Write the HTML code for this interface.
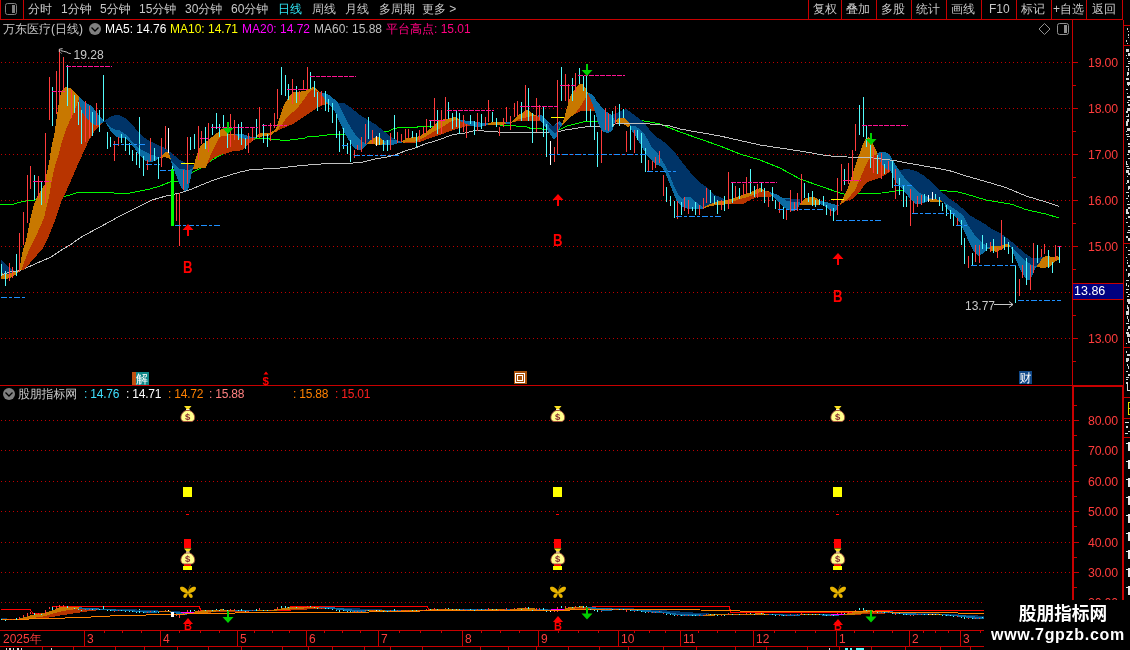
<!DOCTYPE html><html lang="zh-CN"><head><meta charset="utf-8"><title>万东医疗(日线)</title>
<style>
html,body{margin:0;padding:0;background:#000;}
body{width:1130px;height:650px;position:relative;overflow:hidden;font-family:"Liberation Sans","WenQuanYi Zen Hei","Noto Sans CJK SC",sans-serif;font-size:12px;color:#C8C8C8;}
.t{position:absolute;white-space:nowrap;line-height:14px;height:14px;will-change:transform;}
.tb{top:2px;}
.r2{top:22px;}
.ax{color:#FF3C3C;left:1087.5px;font-size:12.3px;letter-spacing:-0.2px}
.sh{top:387px;letter-spacing:-0.2px}
#wm{position:absolute;left:984px;top:600px;width:146px;height:50px;background:#000;}
#wm .a{will-change:transform;position:absolute;left:0;width:146px;text-align:center;color:#fff;font-weight:bold;white-space:nowrap;font-family:"Liberation Sans","Noto Sans CJK SC",sans-serif}
svg{position:absolute;left:0;top:0;will-change:transform;}
svg text{font-family:"Liberation Sans","WenQuanYi Zen Hei","Noto Sans CJK SC",sans-serif;}
</style></head><body>
<svg width="1130" height="650" viewBox="0 0 1130 650" shape-rendering="crispEdges">
<rect width="1130" height="650" fill="#000"/>
<line x1="1" x2="1072" y1="62.5" y2="62.5" stroke="#C00000" stroke-dasharray="1 3"/>
<line x1="1" x2="1072" y1="108.5" y2="108.5" stroke="#C00000" stroke-dasharray="1 3"/>
<line x1="1" x2="1072" y1="154.5" y2="154.5" stroke="#C00000" stroke-dasharray="1 3"/>
<line x1="1" x2="1072" y1="200.5" y2="200.5" stroke="#C00000" stroke-dasharray="1 3"/>
<line x1="1" x2="1072" y1="246.5" y2="246.5" stroke="#C00000" stroke-dasharray="1 3"/>
<line x1="1" x2="1072" y1="292.5" y2="292.5" stroke="#C00000" stroke-dasharray="1 3"/>
<line x1="1" x2="1072" y1="338.5" y2="338.5" stroke="#C00000" stroke-dasharray="1 3"/>
<line x1="1" x2="1072" y1="420.5" y2="420.5" stroke="#C00000" stroke-dasharray="1 3"/>
<line x1="1" x2="1072" y1="450.5" y2="450.5" stroke="#C00000" stroke-dasharray="1 3"/>
<line x1="1" x2="1072" y1="481.5" y2="481.5" stroke="#C00000" stroke-dasharray="1 3"/>
<line x1="1" x2="1072" y1="511.5" y2="511.5" stroke="#C00000" stroke-dasharray="1 3"/>
<line x1="1" x2="1072" y1="542.5" y2="542.5" stroke="#C00000" stroke-dasharray="1 3"/>
<line x1="1" x2="1072" y1="572.5" y2="572.5" stroke="#C00000" stroke-dasharray="1 3"/>
<line x1="1" x2="1072" y1="602.5" y2="602.5" stroke="#C00000" stroke-dasharray="1 3"/>
<polyline points="0,204.5 13,204.5 18,202.5 26,201 35,200 50,198 64,196.5 70,195 76,193 90,192.5 100,192 114,193 130,193 140,191 150,189 160,186 170,182 178,181.5 192,172.5 200,168.5 207,163.5 212,160 220,155.5 230,151 240,149 246,145.5 253,140 255,139 258,138.5 269,138.5 270,139.5 279,139.5 281,140.5 289,140.5 291,139.5 297,139.5 299,138.5 304,138.5 308,136.5 318,136.5 320,135.5 327,135 329,134 335,134.5 342,134.5 360,133 383,131.5 389,131 393,129 399,127.5 417,127.2 419,126.5 433,126.5 450,124.5 482,123.5 487,123.5 505,125.5 515,125.5 517,126.5 526,126.5 528,127.5 531,128.5 541,128.5 543,129.5 546,129.5 556,130 561,129 567,126 575,124 583,122 592,121.5 620,120 641,120.5 650,122 660,124 680,132 700,139 720,146 740,154 760,160 780,168 800,179 820,186 840,193 846,194.4 858,193.6 882,193 896,191 904,190.4 941,190.6 956,191.6 966,194 986,200 1012,204.4 1026,209.6 1046,214 1059,218" fill="none" stroke="#00F800" stroke-width="1"/>
<polyline points="1,275 10,272 18,271 24,269 35,264 51,257 60,251 70,245 77,240 83,236 100,227 120,216 140,206 152,200 166,196 180,193 191,189.5 200,185.5 210,181.5 220,178 230,175 240,172 254,169 263,169 280,168 300,165.6 326,163.6 335,163.5 351,163.2 363,162 375,159 387,157 395,155 405,151 415,148 425,144 435,141 440,139.5 450,135.5 459,133.5 465,133 473,131 476,130.5 483,130.5 485,131.5 497,131.5 499,132.5 555,132.5 565,130 575,128.5 585,127 595,126.5 612,126 615,124 625,123.5 645,123.5 655,124.5 668,125.5 680,129 720,136 760,145 800,151 826,155.5 836,156.5 847,157 870,157.5 886,159.5 894,160.5 910,163.5 930,167 949,170.5 966,176 986,181.6 1006,187.6 1026,196 1046,202 1059,206.4" fill="none" stroke="#C0C0C0" stroke-width="1"/>
<g id="ribbon">
<polygon points="1,260 5,264 10,268 15,271 18,272 18,271 15,272 6,274.5 1,273" fill="#003468"/>
<polygon points="1,273 6,274.5 15,272 18,270 19,271.5 15,275 10,278 5,279.5 1,279" fill="#C87800"/>
<polygon points="21.5,270 25,260 29,250 34,240 36,236 41,225 44,218 49.1,196 51,185 52.2,178.3 53.3,172.7 54.9,166 56.6,161 59,153 61,145 65,132 70,120 74,112 77,105 79,99 79,97 82,99.5 85,102 90,105 94,109 98,114 101,118 104,121 104,122 101,124 98,127 94,132 89,140 85,149 80,160 75,171 70,183 65,194 62,200 59,209 56,218 52,228 48,238 43,248 37,255 30,263 24,270" fill="#B83400"/>
<polygon points="19,271 21,260 23,250 26,241 28,230 30.5,218 33.7,205 37.6,195.5 38.9,194 42.7,187.7 45,183.8 46,177 47.2,171 48.3,166.6 49.4,161 51,150 53,140 54,136 57,116 59,102 61,93 64,88 65,87 68,87.6 71,88.5 76,94 79,97 79,99 77,105 74,112 70,120 65,132 61,145 59,153 56.6,161 54.9,166 53.3,172.7 52.2,178.3 51,185 49.1,196 44,218 41,225 36,236 34,240 29,250 25,260 21.5,270" fill="#C87800"/>
<polygon points="79,97 82,99.5 85,102 90,105 94,109 98,114 101,118 104,121 104,122 101,123.5 98,125 95,125.5 90,122 85,117 81,110 79,99" fill="#0C6CA4"/>
<polygon points="104,121 105,120.5 110,117 115,115 120,115.5 125,118 130,123 135,128 140,134 145,138 150,141.5 155,143.5 160,146 165,148 170,152 175,156 180,160 185,162.5 190,165 194,165.5 193,168 190,169.5 185,169.5 180,169 177,167 174,164 171,160 169,154 167,151.5 163,154 159,158 155,156 150,154 145,151.5 140,149 135,145 130,139 125,134 120,130.5 115,129.5 110,127 105,122 104,122" fill="#003468"/>
<polygon points="104,122 105,122 110,127 115,129.5 120,130.5 125,134 130,139 135,145 140,149 145,151.5 150,154 155,156 159,158 163,154 167,151.5 169,154 171,160 174,164 177,167 180,169 185,169.5 190,169.5 193,168 194,165.5 193,168.5 192,172 190,181 188,190 184,191 182,189 179,183 176,175 173,167 170,159 165,157 159,158.5 155,161 150,162 145,160.5 140,156 135,149 130,142 125,138 120,138 115,136 110,130 105,121.5 104,122.5" fill="#0C6CA4"/>
<polygon points="159,158 163,154 167,151.5 169,154 171,159.5 170,159 165,157 159,158.5" fill="#C87800"/>
<polygon points="206,167.5 208,161 212,152 216,144 219,138 222,136 226,136 230,135 235,134.5 238,133.5 243,134 248,136 254,137.5 257,136 257,137 254,139 250,143 246,146.5 243,150 240,150.5 232,151.5 226,153.5 220,155 212,159 207,164 206,167.5" fill="#B83400"/>
<polygon points="193,169 195,161 197,154 200,147 203,143.5 207,141 212,137 217,133 221,129 223,128.5 226,132 229,134 232,133.5 235,134.5 235,134.5 230,135 226,136 222,136 219,138 216,144 212,152 208,161 206,167.5 200,168 193,169.5" fill="#C87800"/>
<polygon points="235,134.5 238,133.5 243,134 248,136 254,137.5 257,136 257,137 254,138 250,138.5 245,139 240,138 236,135" fill="#0C6CA4"/>
<polygon points="275,132 279,128 283,123 287,117 293,112 299,106 305,98 310,91 313.5,89 319,92 321.5,94 325,100 328,104 329,105 328,103.5 323,105 317,108 311,112 305,116 299,120 293,124 287,126.5 281,129 275,132.5" fill="#B83400"/>
<polygon points="257,135 260,133 269,133 273,131 276,128 279,120 282,110 285,103 289,97 293,92.5 305,91 310,88.5 313.5,87 316,88.5 319,92 319,92 313.5,89 310,91 305,98 299,106 293,112 287,117 283,123 279,128 275,132 272,134.5 267,136 257,137" fill="#C87800"/>
<polygon points="338,102.5 345,103.5 350,107 355,111 360,115 365,118 370,121 375,124 380,128 385,132 390,136 395,139 399,141 402,142 402,142 395,140 390,139.5 384,141 385,144 382,144.5 375,144.5 368,144 366,143.5 363,142 359,138.5 355,134 351,128 347,121 343,113 338,102.5" fill="#003468"/>
<polygon points="319,92 323,93 329,95 334,99 338,102.5 343,113 347,121 351,128 355,134 359,138.5 363,142 366,143.5 368,144 375,144.5 382,144.5 385,144 384,141 390,139.5 395,140 402,142 402,142.5 395,144 391,145.5 385,144.5 382,144.5 375,144.5 368,144 367,144 363,149 358,150 354,148 350,142 345,134 340,123 335,112 332,108 329,105 329,105 328,104 325,100 321.5,94 319,92" fill="#0C6CA4"/>
<polygon points="367,143.5 371,140 375,137.5 378,136.5 381,138.5 384,142 385,144 382,144.5 375,144.5 368,144" fill="#C87800"/>
<polygon points="403,142.5 405,142.5 415,141.5 420,139.5 425,137 430,134 435,131 440,128.5 445,125.5 450,122 455,120 459,119.5 460,120 465,123.5 470,125.5 472,125.5 470,126 465,126.5 460,128 455,129.5 450,131 445,133 440,135 435,136.5 430,138 425,140 420,142 415,142.8 403,142.5" fill="#B83400"/>
<polygon points="402,141.5 407,138 415,137 420,136 425,133 430,129 435,124 440,120 445,119 450,118 456,117 458,119 460,120 460,120 459,119.5 455,120 450,122 445,125.5 440,128.5 435,131 430,134 425,137 420,139.5 415,141.5 405,142.5 403,142.5" fill="#C87800"/>
<polygon points="460,120 465,120.5 470,121 475,121.5 480,122.5 485,123 488,123.5 488,124.5 485,126 480,126.8 475,126.5 470,125.5 465,123.5 460,121" fill="#0C6CA4"/>
<polygon points="488,123.5 492,122 500,122 505,122.5 506,123 506,123.5 504,124.5 496,125 488,125" fill="#C87800"/>
<polygon points="505,122.5 510,122 510,123.5 506,124" fill="#0C6CA4"/>
<polygon points="510,123 516,121.3 518,119.5 523,118 526,117 530,116.5 536,115.8 538.5,116.5 540,120 540,120.8 523,121 516,121.5 510,123.2" fill="#B83400"/>
<polygon points="510,123 514,119 518,115 522,113 526,109.5 528,110 532,113.5 536,115.5 538.5,116.5 538.5,116.5 536,115.8 530,116.5 526,117 523,118 518,119.5 516,121.3 510,123" fill="#C87800"/>
<polygon points="537.5,115.5 541,115 544,118 548,122 553,126 557,123 560,121 562,124 562,125 559,130 557,136 554,140 550,134 546,128 543,124 540,120" fill="#0C6CA4"/>
<polygon points="548,123 553,126.4 558,123 560,126 558,130 555,134 552,131 550,129" fill="#003468"/>
<polygon points="562,125 565,115 568,104 571,95 575,89 579,84.5 583,84 586,89 588,92.5 588,93.5 585,99 580,107 575,114 571,116.5 567,120 562,125" fill="#C87800"/>
<polygon points="575,114 580,107 585,99 588,93.5 590,98 592,103 594,108 595,111.5 593,110.8 587,110.5 581,111" fill="#B83400"/>
<polygon points="588,92.5 592,94.5 595,98 597,102 600,105 603,108.5 606,111.5 609,113.5 612,115 614,119 615,121 615,122 614,125 613,129 610,132 607,133 604,132 601,129.5 599,125 597,119 595,111.5 594,108 592,103 590,98 588,93.5" fill="#0C6CA4"/>
<polygon points="612,115 615,113.5 619,112 623,110 626,109 629,111 633,114 637,117 641,120 645,123.5 649,129 653,134 657,137.5 660,139 664,142 670,148 676,154 682,162 688,169.5 690,172 695,178 700,182.5 705,186 710,191 715,195 720,197 725,199.5 728,200.5 728,200.5 720,201 714,202.5 708,205 703,208 703,207 696,202 690,197 686,196.5 682,199 678,194 674,186 670,176 666,167 662,160 658,154 652,148 648,140 645,135 642,131 638,128 635,126 631,125.5 630,124 627,120 624,117.5 620,117.5 617,119 615,121 614,119 612,115" fill="#003468"/>
<polygon points="630,124 631,125.5 635,126 638,128 642,131 645,135 648,140 652,148 658,154 662,160 666,167 670,176 674,186 678,194 682,199 686,196.5 690,197 696,202 703,207 703,209 700,209 694,209 688,209 682,207 677,202 673,192 669,182 665,172 661,166 656,165 650,159 646,154 642,147 638,140 635,135 632,131 630,128" fill="#0C6CA4"/>
<polygon points="615,122 615,121 617,119 620,117.5 624,117.5 627,120 630,124 630,125 629,127.5 625,125 619,123" fill="#C87800"/>
<polygon points="731,202.5 738,199.5 744,198 750,196 756,194 760,192 765,191 770,192.5 773,195 773,195 770,197 762,197 756,197.5 750,200 744,203.5 731,203.5" fill="#B83400"/>
<polygon points="703,208 708,205 714,202.5 720,201 728,200 732,198.5 738,196.5 744,194.5 750,192.5 755,190 760,188 762,189 765,191 769,191.5 770,192.5 770,192.5 765,191 760,192 756,194 750,196 744,198 738,199.5 731,202.5 731,203.5 724,204.5 717,205 710,206 703,209" fill="#C87800"/>
<polygon points="769,192 773,193 778,195 783,198 790,198.5 800,198.5 800,204.5 798,208 795,210.5 790,210.5 785,208 781,205 777,201 773,197 770,193" fill="#0C6CA4"/>
<polygon points="783,198.5 790,198.5 800,198.5 800,201.5 790,201.5 787,201 783,198.5" fill="#003468"/>
<polygon points="800,204 804,199 809,197 814,197 818,199 820,202 820,204.5 800,205" fill="#C87800"/>
<polygon points="820,201 826,202 832,204 838,205 839,205 837,209 834,212 830,210 826,207 820,204" fill="#0C6CA4"/>
<polygon points="840,204.4 848,199 855,190 859,181 863,172 866,165 869,159 870,158 873,156 877.5,154 879,159 882,165 886,169 891,171 891,171 888,173 885,175 880,178 873,180 866,183 861,190 858,193 852,199 846,201 840,205" fill="#B83400"/>
<polygon points="840,204 844,196 847,190 851,179 855,167 859,155 863,144 866,138 869,137 872,142 875,148 877.5,153.5 877.5,154 873,156 870,158 869,159 866,165 863,172 859,181 855,190 848,199 840,204.4" fill="#C87800"/>
<polygon points="899,170.5 903,169.5 907,169 912,170 918,172 923,175 928,179 933,184 938,189 944,194 950,199 956,203 962,208 966,212 971,216 978,220 985,224 992,229 999,232.5 1003,235 1007,238 1012,242 1015,245 1020,249 1026,254 1032,258 1037,258 1043,257 1043,257 1040,262 1037,266 1034,266 1032,265 1026,261 1020,256 1014,250 1010,245 1006,244 1002,245.5 997,246 992,246 988,247 984,244 979,240 974,234 970,228 967,223 963,215 956,210 950,206 944,202 934,199 930,198 924,195 918,192 914,188 910,184 907,181 904,177 901,173 899,170" fill="#003468"/>
<polygon points="877.5,153.5 880,152 885,152 888,153.5 891,157 894,162 897,167 899,170 901,173 904,177 907,181 910,184 914,188 918,192 924,195 930,198 934,199 944,202 950,206 956,210 963,215 967,223 970,228 974,234 979,240 984,244 988,247 992,246 997,246 1002,245.5 1006,244 1010,245 1014,250 1020,256 1026,261 1032,265 1034,266 1037,266 1037,266 1035,269 1033,274 1030,280 1027,280 1024,276 1020,269 1017,262 1014,255 1011,248 1010,245 1006,244 1002,245.5 997,246 992,246 990,247 988,249 984,252.5 979,256 974,252 970,244 965,233 960,223 954,215 950,212 946,208 944,202 934,199 930,200 926,202 921,204 916,204 912,201 908,196 903,190 900,187 896,182 893,177 891,171 886,169 882,165 879,159 877.5,154" fill="#0C6CA4"/>
<polygon points="928,199.6 934,199 940,200 942,202 938,202.4 930,201.6" fill="#C87800"/>
<polygon points="989,248 992,246 997,246 1002,245.5 1006,244 1009,244.5 1010,246.5 1006,247 1001,249.5 997,252 992,251 989,248.5" fill="#C87800"/>
<polygon points="1037,266 1040,262 1043,257 1046,256 1050,256.5 1054,257 1058,256 1059.5,258 1059.5,259.5 1056,261 1052,264 1049,267 1045,267.7 1040,267.5 1037,266.5" fill="#C87800"/>
</g>
<clipPath id="gclip"><rect x="0" y="0" width="20" height="400"/><rect x="612" y="0" width="40" height="400"/><rect x="836" y="0" width="120" height="400"/></clipPath>
<polyline points="1,275 10,272 18,271 24,269 35,264 51,257 60,251 70,245 77,240 83,236 100,227 120,216 140,206 152,200 166,196 180,193 191,189.5 200,185.5 210,181.5 220,178 230,175 240,172 254,169 263,169 280,168 300,165.6 326,163.6 335,163.5 351,163.2 363,162 375,159 387,157 395,155 405,151 415,148 425,144 435,141 440,139.5 450,135.5 459,133.5 465,133 473,131 476,130.5 483,130.5 485,131.5 497,131.5 499,132.5 555,132.5 565,130 575,128.5 585,127 595,126.5 612,126 615,124 625,123.5 645,123.5 655,124.5 668,125.5 680,129 720,136 760,145 800,151 826,155.5 836,156.5 847,157 870,157.5 886,159.5 894,160.5 910,163.5 930,167 949,170.5 966,176 986,181.6 1006,187.6 1026,196 1046,202 1059,206.4" fill="none" stroke="#C0C0C0" stroke-width="1" clip-path="url(#gclip)"/>
<g id="kbars">
<rect x="171" y="169" width="3" height="57" fill="#00FF00"/>
<rect x="1" y="264" width="1" height="12" fill="#54FCFC"/>
<rect x="5" y="271" width="1" height="15" fill="#54FCFC"/>
<rect x="9" y="263" width="1" height="18" fill="#FF3C3C"/>
<rect x="12" y="267" width="1" height="11" fill="#FF3C3C"/>
<rect x="16" y="254" width="1" height="22" fill="#54FCFC"/>
<rect x="19" y="233" width="1" height="39" fill="#FF3C3C"/>
<rect x="23" y="212" width="1" height="33" fill="#FF3C3C"/>
<rect x="27" y="175" width="1" height="48" fill="#FF3C3C"/>
<rect x="30" y="166" width="1" height="23" fill="#FF3C3C"/>
<rect x="34" y="175" width="1" height="25" fill="#54FCFC"/>
<rect x="38" y="176" width="1" height="22" fill="#FF3C3C"/>
<rect x="41" y="182" width="1" height="23" fill="#54FCFC"/>
<rect x="45" y="133" width="1" height="70" fill="#FF3C3C"/>
<rect x="49" y="77" width="1" height="43" fill="#FF3C3C"/>
<rect x="52" y="87" width="1" height="39" fill="#54FCFC"/>
<rect x="56" y="71" width="1" height="43" fill="#FF3C3C"/>
<rect x="59" y="49" width="1" height="51" fill="#FF3C3C"/>
<rect x="63" y="57" width="1" height="33" fill="#FF3C3C"/>
<rect x="67" y="65" width="1" height="41" fill="#54FCFC"/>
<rect x="71" y="90" width="1" height="28" fill="#FF3C3C"/>
<rect x="74" y="95" width="1" height="18" fill="#54FCFC"/>
<rect x="78" y="102" width="1" height="23" fill="#54FCFC"/>
<rect x="81" y="110" width="1" height="34" fill="#54FCFC"/>
<rect x="85" y="101" width="1" height="41" fill="#FF3C3C"/>
<rect x="89" y="106" width="1" height="32" fill="#FF3C3C"/>
<rect x="92" y="112" width="1" height="24" fill="#54FCFC"/>
<rect x="96" y="103" width="1" height="23" fill="#FF3C3C"/>
<rect x="99" y="110" width="1" height="22" fill="#54FCFC"/>
<rect x="103" y="75" width="1" height="46" fill="#54FCFC"/>
<rect x="107" y="132" width="1" height="17" fill="#54FCFC"/>
<rect x="110" y="137" width="1" height="10" fill="#54FCFC"/>
<rect x="114" y="141" width="1" height="20" fill="#FF3C3C"/>
<rect x="118" y="137" width="1" height="9" fill="#FF3C3C"/>
<rect x="121" y="134" width="1" height="9" fill="#54FCFC"/>
<rect x="125" y="137" width="1" height="14" fill="#54FCFC"/>
<rect x="129" y="143" width="1" height="12" fill="#54FCFC"/>
<rect x="132" y="150" width="1" height="11" fill="#54FCFC"/>
<rect x="136" y="152" width="1" height="13" fill="#54FCFC"/>
<rect x="139" y="117" width="1" height="51" fill="#54FCFC"/>
<rect x="143" y="156" width="1" height="20" fill="#54FCFC"/>
<rect x="147" y="160" width="1" height="10" fill="#FF3C3C"/>
<rect x="150" y="138" width="1" height="23" fill="#FF3C3C"/>
<rect x="154" y="148" width="1" height="13" fill="#54FCFC"/>
<rect x="158" y="157" width="1" height="22" fill="#54FCFC"/>
<rect x="161" y="138" width="1" height="29" fill="#FF3C3C"/>
<rect x="165" y="126" width="1" height="23" fill="#FF3C3C"/>
<rect x="168" y="128" width="1" height="25" fill="#FFFFFF"/>
<rect x="172" y="166" width="1" height="3" fill="#54FCFC"/>
<rect x="176" y="194" width="1" height="27" fill="#FF3C3C"/>
<rect x="179" y="193" width="1" height="53" fill="#FF3C3C"/>
<rect x="183" y="170" width="1" height="20" fill="#FF3C3C"/>
<rect x="187" y="137" width="1" height="47" fill="#FF3C3C"/>
<rect x="190" y="137" width="1" height="13" fill="#54FCFC"/>
<rect x="194" y="134" width="1" height="15" fill="#54FCFC"/>
<rect x="198" y="126" width="1" height="34" fill="#FF3C3C"/>
<rect x="201" y="131" width="1" height="13" fill="#FF3C3C"/>
<rect x="205" y="127" width="1" height="22" fill="#54FCFC"/>
<rect x="208" y="123" width="1" height="29" fill="#FF3C3C"/>
<rect x="212" y="124" width="1" height="11" fill="#54FCFC"/>
<rect x="216" y="113" width="1" height="16" fill="#54FCFC"/>
<rect x="219" y="124" width="1" height="13" fill="#54FCFC"/>
<rect x="223" y="115" width="1" height="13" fill="#54FCFC"/>
<rect x="227" y="129" width="1" height="19" fill="#54FCFC"/>
<rect x="230" y="114" width="1" height="33" fill="#FF3C3C"/>
<rect x="234" y="120" width="1" height="20" fill="#FF3C3C"/>
<rect x="238" y="124" width="1" height="16" fill="#54FCFC"/>
<rect x="241" y="122" width="1" height="23" fill="#54FCFC"/>
<rect x="245" y="138" width="1" height="11" fill="#54FCFC"/>
<rect x="248" y="133" width="1" height="20" fill="#FF3C3C"/>
<rect x="252" y="128" width="1" height="13" fill="#FF3C3C"/>
<rect x="256" y="119" width="1" height="19" fill="#54FCFC"/>
<rect x="259" y="107" width="1" height="31" fill="#FF3C3C"/>
<rect x="263" y="124" width="1" height="19" fill="#54FCFC"/>
<rect x="267" y="134" width="1" height="13" fill="#54FCFC"/>
<rect x="270" y="123" width="1" height="18" fill="#FF3C3C"/>
<rect x="274" y="113" width="1" height="15" fill="#FF3C3C"/>
<rect x="277" y="89" width="1" height="30" fill="#FF3C3C"/>
<rect x="281" y="67" width="1" height="28" fill="#54FCFC"/>
<rect x="285" y="75" width="1" height="21" fill="#54FCFC"/>
<rect x="288" y="84" width="1" height="16" fill="#54FCFC"/>
<rect x="292" y="79" width="1" height="25" fill="#FF3C3C"/>
<rect x="296" y="86" width="1" height="17" fill="#54FCFC"/>
<rect x="299" y="91" width="1" height="10" fill="#FF3C3C"/>
<rect x="303" y="80" width="1" height="10" fill="#FF3C3C"/>
<rect x="307" y="67" width="1" height="22" fill="#FF3C3C"/>
<rect x="310" y="72" width="1" height="17" fill="#54FCFC"/>
<rect x="314" y="81" width="1" height="16" fill="#54FCFC"/>
<rect x="317" y="92" width="1" height="19" fill="#54FCFC"/>
<rect x="321" y="91" width="1" height="14" fill="#FF3C3C"/>
<rect x="325" y="91" width="1" height="20" fill="#54FCFC"/>
<rect x="328" y="99" width="1" height="13" fill="#54FCFC"/>
<rect x="332" y="103" width="1" height="20" fill="#54FCFC"/>
<rect x="336" y="114" width="1" height="24" fill="#54FCFC"/>
<rect x="339" y="131" width="1" height="21" fill="#54FCFC"/>
<rect x="343" y="128" width="1" height="21" fill="#54FCFC"/>
<rect x="347" y="143" width="1" height="11" fill="#54FCFC"/>
<rect x="350" y="140" width="1" height="22" fill="#54FCFC"/>
<rect x="354" y="150" width="1" height="8" fill="#FF3C3C"/>
<rect x="357" y="145" width="1" height="5" fill="#FF3C3C"/>
<rect x="361" y="137" width="1" height="15" fill="#FF3C3C"/>
<rect x="365" y="124" width="1" height="20" fill="#FF3C3C"/>
<rect x="368" y="117" width="1" height="22" fill="#54FCFC"/>
<rect x="372" y="130" width="1" height="14" fill="#FF3C3C"/>
<rect x="376" y="136" width="1" height="10" fill="#FFFFFF"/>
<rect x="379" y="133" width="1" height="12" fill="#54FCFC"/>
<rect x="383" y="140" width="1" height="11" fill="#54FCFC"/>
<rect x="387" y="140" width="1" height="11" fill="#54FCFC"/>
<rect x="390" y="133" width="1" height="17" fill="#FF3C3C"/>
<rect x="394" y="115" width="1" height="24" fill="#54FCFC"/>
<rect x="397" y="132" width="1" height="11" fill="#FF3C3C"/>
<rect x="401" y="134" width="1" height="8" fill="#FF3C3C"/>
<rect x="405" y="129" width="1" height="10" fill="#FF3C3C"/>
<rect x="408" y="129" width="1" height="9" fill="#FF3C3C"/>
<rect x="412" y="131" width="1" height="7" fill="#54FCFC"/>
<rect x="416" y="133" width="1" height="14" fill="#54FCFC"/>
<rect x="419" y="130" width="1" height="12" fill="#FF3C3C"/>
<rect x="423" y="127" width="1" height="8" fill="#FF3C3C"/>
<rect x="426" y="119" width="1" height="14" fill="#FF3C3C"/>
<rect x="430" y="121" width="1" height="7" fill="#54FCFC"/>
<rect x="434" y="98" width="1" height="30" fill="#FF3C3C"/>
<rect x="437" y="110" width="1" height="24" fill="#54FCFC"/>
<rect x="441" y="110" width="1" height="24" fill="#FF3C3C"/>
<rect x="445" y="97" width="1" height="23" fill="#FF3C3C"/>
<rect x="448" y="102" width="1" height="17" fill="#54FCFC"/>
<rect x="452" y="113" width="1" height="16" fill="#54FCFC"/>
<rect x="456" y="111" width="1" height="16" fill="#54FCFC"/>
<rect x="459" y="113" width="1" height="21" fill="#54FCFC"/>
<rect x="463" y="115" width="1" height="17" fill="#FF3C3C"/>
<rect x="466" y="124" width="1" height="14" fill="#FF3C3C"/>
<rect x="470" y="115" width="1" height="9" fill="#54FCFC"/>
<rect x="474" y="121" width="1" height="14" fill="#54FCFC"/>
<rect x="477" y="113" width="1" height="18" fill="#FF3C3C"/>
<rect x="481" y="114" width="1" height="15" fill="#54FCFC"/>
<rect x="485" y="117" width="1" height="9" fill="#FF3C3C"/>
<rect x="488" y="100" width="1" height="22" fill="#FF3C3C"/>
<rect x="492" y="112" width="1" height="10" fill="#54FCFC"/>
<rect x="496" y="118" width="1" height="9" fill="#54FCFC"/>
<rect x="499" y="127" width="1" height="9" fill="#FF3C3C"/>
<rect x="503" y="118" width="1" height="9" fill="#FF3C3C"/>
<rect x="506" y="107" width="1" height="15" fill="#FF3C3C"/>
<rect x="510" y="116" width="1" height="14" fill="#FF3C3C"/>
<rect x="514" y="103" width="1" height="14" fill="#FF3C3C"/>
<rect x="517" y="101" width="1" height="15" fill="#FF3C3C"/>
<rect x="521" y="102" width="1" height="19" fill="#54FCFC"/>
<rect x="525" y="85" width="1" height="33" fill="#FF3C3C"/>
<rect x="528" y="88" width="1" height="33" fill="#54FCFC"/>
<rect x="532" y="113" width="1" height="30" fill="#54FCFC"/>
<rect x="536" y="98" width="1" height="34" fill="#FF3C3C"/>
<rect x="539" y="105" width="1" height="15" fill="#FF3C3C"/>
<rect x="543" y="107" width="1" height="30" fill="#54FCFC"/>
<rect x="546" y="124" width="1" height="33" fill="#54FCFC"/>
<rect x="550" y="141" width="1" height="24" fill="#FFFFFF"/>
<rect x="554" y="147" width="1" height="15" fill="#FF3C3C"/>
<rect x="557" y="80" width="1" height="74" fill="#FF3C3C"/>
<rect x="561" y="67" width="1" height="34" fill="#54FCFC"/>
<rect x="565" y="74" width="1" height="27" fill="#FF3C3C"/>
<rect x="568" y="84" width="1" height="18" fill="#FF3C3C"/>
<rect x="572" y="78" width="1" height="23" fill="#54FCFC"/>
<rect x="575" y="73" width="1" height="19" fill="#FF3C3C"/>
<rect x="579" y="68" width="1" height="16" fill="#54FCFC"/>
<rect x="583" y="76" width="1" height="15" fill="#54FCFC"/>
<rect x="586" y="76" width="1" height="45" fill="#54FCFC"/>
<rect x="590" y="109" width="1" height="18" fill="#54FCFC"/>
<rect x="594" y="115" width="1" height="25" fill="#54FCFC"/>
<rect x="597" y="132" width="1" height="35" fill="#54FCFC"/>
<rect x="601" y="130" width="1" height="33" fill="#FF3C3C"/>
<rect x="605" y="108" width="1" height="22" fill="#FF3C3C"/>
<rect x="608" y="113" width="1" height="18" fill="#FF3C3C"/>
<rect x="612" y="111" width="1" height="16" fill="#54FCFC"/>
<rect x="615" y="106" width="1" height="18" fill="#FF3C3C"/>
<rect x="619" y="104" width="1" height="22" fill="#54FCFC"/>
<rect x="623" y="109" width="1" height="9" fill="#54FCFC"/>
<rect x="626" y="131" width="1" height="21" fill="#FF3C3C"/>
<rect x="630" y="126" width="1" height="24" fill="#54FCFC"/>
<rect x="634" y="130" width="1" height="23" fill="#FF3C3C"/>
<rect x="637" y="130" width="1" height="10" fill="#54FCFC"/>
<rect x="641" y="133" width="1" height="30" fill="#54FCFC"/>
<rect x="645" y="148" width="1" height="24" fill="#54FCFC"/>
<rect x="648" y="160" width="1" height="11" fill="#FF3C3C"/>
<rect x="652" y="161" width="1" height="9" fill="#FF3C3C"/>
<rect x="655" y="157" width="1" height="11" fill="#FF3C3C"/>
<rect x="659" y="151" width="1" height="12" fill="#FF3C3C"/>
<rect x="663" y="175" width="1" height="21" fill="#FF3C3C"/>
<rect x="666" y="187" width="1" height="15" fill="#54FCFC"/>
<rect x="670" y="196" width="1" height="10" fill="#54FCFC"/>
<rect x="674" y="201" width="1" height="17" fill="#54FCFC"/>
<rect x="677" y="201" width="1" height="18" fill="#FF3C3C"/>
<rect x="681" y="202" width="1" height="13" fill="#54FCFC"/>
<rect x="684" y="197" width="1" height="14" fill="#FF3C3C"/>
<rect x="688" y="200" width="1" height="14" fill="#FF3C3C"/>
<rect x="692" y="207" width="1" height="4" fill="#54FCFC"/>
<rect x="695" y="202" width="1" height="13" fill="#54FCFC"/>
<rect x="699" y="205" width="1" height="10" fill="#FF3C3C"/>
<rect x="703" y="198" width="1" height="11" fill="#FF3C3C"/>
<rect x="706" y="188" width="1" height="15" fill="#FF3C3C"/>
<rect x="710" y="190" width="1" height="13" fill="#54FCFC"/>
<rect x="714" y="196" width="1" height="8" fill="#54FCFC"/>
<rect x="717" y="200" width="1" height="14" fill="#54FCFC"/>
<rect x="721" y="200" width="1" height="10" fill="#FF3C3C"/>
<rect x="724" y="196" width="1" height="15" fill="#54FCFC"/>
<rect x="728" y="172" width="1" height="37" fill="#FF3C3C"/>
<rect x="732" y="183" width="1" height="20" fill="#54FCFC"/>
<rect x="735" y="186" width="1" height="12" fill="#FF3C3C"/>
<rect x="739" y="188" width="1" height="11" fill="#54FCFC"/>
<rect x="743" y="184" width="1" height="12" fill="#FF3C3C"/>
<rect x="746" y="177" width="1" height="17" fill="#FF3C3C"/>
<rect x="750" y="169" width="1" height="25" fill="#54FCFC"/>
<rect x="754" y="186" width="1" height="11" fill="#54FCFC"/>
<rect x="757" y="184" width="1" height="14" fill="#FF3C3C"/>
<rect x="761" y="183" width="1" height="9" fill="#54FCFC"/>
<rect x="764" y="188" width="1" height="15" fill="#54FCFC"/>
<rect x="768" y="197" width="1" height="10" fill="#FF3C3C"/>
<rect x="772" y="187" width="1" height="14" fill="#54FCFC"/>
<rect x="775" y="200" width="1" height="9" fill="#54FCFC"/>
<rect x="779" y="202" width="1" height="11" fill="#FF3C3C"/>
<rect x="783" y="207" width="1" height="12" fill="#54FCFC"/>
<rect x="786" y="209" width="1" height="11" fill="#FF3C3C"/>
<rect x="790" y="190" width="1" height="22" fill="#FF3C3C"/>
<rect x="794" y="202" width="1" height="9" fill="#FF3C3C"/>
<rect x="797" y="193" width="1" height="18" fill="#FF3C3C"/>
<rect x="801" y="174" width="1" height="30" fill="#FF3C3C"/>
<rect x="804" y="183" width="1" height="15" fill="#54FCFC"/>
<rect x="808" y="193" width="1" height="9" fill="#54FCFC"/>
<rect x="812" y="191" width="1" height="15" fill="#54FCFC"/>
<rect x="815" y="200" width="1" height="7" fill="#54FCFC"/>
<rect x="819" y="199" width="1" height="6" fill="#54FCFC"/>
<rect x="823" y="196" width="1" height="10" fill="#54FCFC"/>
<rect x="826" y="205" width="1" height="10" fill="#54FCFC"/>
<rect x="830" y="209" width="1" height="7" fill="#FF3C3C"/>
<rect x="833" y="208" width="1" height="13" fill="#54FCFC"/>
<rect x="837" y="178" width="1" height="37" fill="#FF3C3C"/>
<rect x="841" y="164" width="1" height="27" fill="#FF3C3C"/>
<rect x="844" y="169" width="1" height="16" fill="#54FCFC"/>
<rect x="848" y="163" width="1" height="21" fill="#FF3C3C"/>
<rect x="852" y="150" width="1" height="30" fill="#FF3C3C"/>
<rect x="855" y="124" width="1" height="27" fill="#FF3C3C"/>
<rect x="859" y="105" width="1" height="30" fill="#54FCFC"/>
<rect x="863" y="97" width="1" height="40" fill="#54FCFC"/>
<rect x="866" y="125" width="1" height="22" fill="#54FCFC"/>
<rect x="870" y="145" width="1" height="23" fill="#54FCFC"/>
<rect x="873" y="147" width="1" height="26" fill="#FF3C3C"/>
<rect x="877" y="155" width="1" height="19" fill="#54FCFC"/>
<rect x="881" y="153" width="1" height="26" fill="#FF3C3C"/>
<rect x="884" y="164" width="1" height="10" fill="#54FCFC"/>
<rect x="888" y="161" width="1" height="11" fill="#FF3C3C"/>
<rect x="892" y="161" width="1" height="27" fill="#54FCFC"/>
<rect x="895" y="169" width="1" height="30" fill="#FF3C3C"/>
<rect x="899" y="178" width="1" height="17" fill="#54FCFC"/>
<rect x="903" y="186" width="1" height="21" fill="#54FCFC"/>
<rect x="906" y="196" width="1" height="11" fill="#54FCFC"/>
<rect x="910" y="189" width="1" height="37" fill="#FF3C3C"/>
<rect x="913" y="201" width="1" height="12" fill="#FF3C3C"/>
<rect x="917" y="196" width="1" height="11" fill="#FF3C3C"/>
<rect x="921" y="195" width="1" height="10" fill="#FF3C3C"/>
<rect x="924" y="194" width="1" height="8" fill="#54FCFC"/>
<rect x="928" y="195" width="1" height="7" fill="#FFFFFF"/>
<rect x="932" y="192" width="1" height="8" fill="#FFFFFF"/>
<rect x="935" y="194" width="1" height="5" fill="#54FCFC"/>
<rect x="939" y="197" width="1" height="9" fill="#54FCFC"/>
<rect x="942" y="203" width="1" height="8" fill="#54FCFC"/>
<rect x="946" y="205" width="1" height="11" fill="#54FCFC"/>
<rect x="950" y="210" width="1" height="9" fill="#54FCFC"/>
<rect x="953" y="214" width="1" height="12" fill="#54FCFC"/>
<rect x="957" y="218" width="1" height="8" fill="#FF3C3C"/>
<rect x="961" y="220" width="1" height="25" fill="#54FCFC"/>
<rect x="964" y="238" width="1" height="26" fill="#54FCFC"/>
<rect x="968" y="256" width="1" height="12" fill="#FF3C3C"/>
<rect x="972" y="253" width="1" height="13" fill="#54FCFC"/>
<rect x="975" y="245" width="1" height="17" fill="#FF3C3C"/>
<rect x="979" y="245" width="1" height="18" fill="#FF3C3C"/>
<rect x="982" y="235" width="1" height="14" fill="#54FCFC"/>
<rect x="986" y="243" width="1" height="8" fill="#54FCFC"/>
<rect x="990" y="242" width="1" height="10" fill="#FF3C3C"/>
<rect x="993" y="239" width="1" height="14" fill="#54FCFC"/>
<rect x="997" y="248" width="1" height="10" fill="#FF3C3C"/>
<rect x="1001" y="220" width="1" height="30" fill="#FF3C3C"/>
<rect x="1004" y="237" width="1" height="13" fill="#54FCFC"/>
<rect x="1008" y="242" width="1" height="12" fill="#54FCFC"/>
<rect x="1012" y="247" width="1" height="16" fill="#54FCFC"/>
<rect x="1015" y="265" width="1" height="38" fill="#54FCFC"/>
<rect x="1019" y="279" width="1" height="17" fill="#FF3C3C"/>
<rect x="1022" y="265" width="1" height="13" fill="#FF3C3C"/>
<rect x="1026" y="258" width="1" height="27" fill="#54FCFC"/>
<rect x="1030" y="265" width="1" height="25" fill="#FF3C3C"/>
<rect x="1033" y="243" width="1" height="30" fill="#FF3C3C"/>
<rect x="1037" y="245" width="1" height="18" fill="#54FCFC"/>
<rect x="1041" y="249" width="1" height="8" fill="#FF3C3C"/>
<rect x="1044" y="244" width="1" height="10" fill="#FF3C3C"/>
<rect x="1048" y="250" width="1" height="18" fill="#54FCFC"/>
<rect x="1052" y="262" width="1" height="11" fill="#54FCFC"/>
<rect x="1055" y="245" width="1" height="15" fill="#FF3C3C"/>
<rect x="1059" y="247" width="1" height="16" fill="#54FCFC"/>
</g>
<line x1="66" x2="112" y1="66.5" y2="66.5" stroke="#FF1493" stroke-dasharray="4.5 1.1"/>
<line x1="52" x2="65" y1="91.5" y2="91.5" stroke="#FF1493" stroke-dasharray="4.5 1.1"/>
<line x1="113" x2="145" y1="144.5" y2="144.5" stroke="#1E90FF" stroke-dasharray="6 2 3 2"/>
<line x1="146" x2="160" y1="164.5" y2="164.5" stroke="#1E90FF" stroke-dasharray="6 2 3 2"/>
<line x1="160" x2="174" y1="170.5" y2="170.5" stroke="#1E90FF" stroke-dasharray="6 2 3 2"/>
<line x1="175" x2="221" y1="225.5" y2="225.5" stroke="#1E90FF" stroke-dasharray="6 2 3 2"/>
<line x1="1" x2="25" y1="297.5" y2="297.5" stroke="#1E90FF" stroke-dasharray="6 2 3 2"/>
<line x1="181" x2="194" y1="163.5" y2="163.5" stroke="#FFFF00" stroke-dasharray="none"/>
<line x1="211" x2="258" y1="127.5" y2="127.5" stroke="#FF1493" stroke-dasharray="4.5 1.1"/>
<line x1="262" x2="287" y1="125.5" y2="125.5" stroke="#FF1493" stroke-dasharray="4.5 1.1"/>
<line x1="200" x2="209" y1="138.5" y2="138.5" stroke="#FF1493" stroke-dasharray="4.5 1.1"/>
<line x1="310" x2="356" y1="76.5" y2="76.5" stroke="#FF1493" stroke-dasharray="4.5 1.1"/>
<line x1="287" x2="308" y1="89.5" y2="89.5" stroke="#FF1493" stroke-dasharray="4.5 1.1"/>
<line x1="429" x2="446" y1="120.5" y2="120.5" stroke="#FF1493" stroke-dasharray="4.5 1.1"/>
<line x1="447" x2="494" y1="110.5" y2="110.5" stroke="#FF1493" stroke-dasharray="4.5 1.1"/>
<line x1="354" x2="399" y1="155.5" y2="155.5" stroke="#1E90FF" stroke-dasharray="6 2 3 2"/>
<line x1="342" x2="351" y1="145.5" y2="145.5" stroke="#1E90FF" stroke-dasharray="6 2 3 2"/>
<line x1="520" x2="559" y1="106.5" y2="106.5" stroke="#FF1493" stroke-dasharray="4.5 1.1"/>
<line x1="560" x2="577" y1="85.5" y2="85.5" stroke="#FF1493" stroke-dasharray="4.5 1.1"/>
<line x1="578" x2="625" y1="75.5" y2="75.5" stroke="#FF1493" stroke-dasharray="4.5 1.1"/>
<line x1="551" x2="564" y1="117.5" y2="117.5" stroke="#FFFF00" stroke-dasharray="none"/>
<line x1="549" x2="647" y1="154.5" y2="154.5" stroke="#1E90FF" stroke-dasharray="6 2 3 2"/>
<line x1="647" x2="676" y1="171.5" y2="171.5" stroke="#1E90FF" stroke-dasharray="6 2 3 2"/>
<line x1="676" x2="723" y1="216.5" y2="216.5" stroke="#1E90FF" stroke-dasharray="6 2 3 2"/>
<line x1="778" x2="825" y1="209.5" y2="209.5" stroke="#1E90FF" stroke-dasharray="6 2 3 2"/>
<line x1="836" x2="882" y1="220.5" y2="220.5" stroke="#1E90FF" stroke-dasharray="6 2 3 2"/>
<line x1="731" x2="777" y1="182.5" y2="182.5" stroke="#FF1493" stroke-dasharray="4.5 1.1"/>
<line x1="843" x2="861" y1="180.5" y2="180.5" stroke="#FF1493" stroke-dasharray="4.5 1.1"/>
<line x1="862" x2="908" y1="125.5" y2="125.5" stroke="#FF1493" stroke-dasharray="4.5 1.1"/>
<line x1="831" x2="844" y1="199.5" y2="199.5" stroke="#FFFF00" stroke-dasharray="none"/>
<line x1="894" x2="912" y1="185.5" y2="185.5" stroke="#1E90FF" stroke-dasharray="6 2 3 2"/>
<line x1="912" x2="955" y1="213.5" y2="213.5" stroke="#1E90FF" stroke-dasharray="6 2 3 2"/>
<line x1="956" x2="969" y1="225.5" y2="225.5" stroke="#1E90FF" stroke-dasharray="6 2 3 2"/>
<line x1="971" x2="1017" y1="265.5" y2="265.5" stroke="#1E90FF" stroke-dasharray="6 2 3 2"/>
<line x1="1018" x2="1061" y1="300.5" y2="300.5" stroke="#1E90FF" stroke-dasharray="6 2 3 2"/>
<line x1="1058" x2="1061" y1="246.5" y2="246.5" stroke="#FF1493" stroke-dasharray="4.5 1.1"/>
<line x1="33" x2="51" y1="181.5" y2="181.5" stroke="#FF1493" stroke-dasharray="4.5 1.1"/>
<polyline points="1,609.5 30,609.5 33,613.5 52,613.5 52,606.5 199,606.5 201,610.5 290,610.5 290,606.5 427,606.5 429,609.5 592,609.5 592,606.5 729,606.5 731,612.5 875,612.5 875,610.5 984,610.5" fill="none" stroke="#FF0000" stroke-width="1"/>
<g transform="translate(0,601.4) scale(1,0.0663)">
<rect x="171" y="169" width="3" height="57" fill="#00FF00"/>
<rect x="1" y="264" width="1" height="12" fill="#54FCFC"/>
<rect x="5" y="271" width="1" height="15" fill="#54FCFC"/>
<rect x="9" y="263" width="1" height="18" fill="#FF3C3C"/>
<rect x="12" y="267" width="1" height="11" fill="#FF3C3C"/>
<rect x="16" y="254" width="1" height="22" fill="#54FCFC"/>
<rect x="19" y="233" width="1" height="39" fill="#FF3C3C"/>
<rect x="23" y="212" width="1" height="33" fill="#FF3C3C"/>
<rect x="27" y="175" width="1" height="48" fill="#FF3C3C"/>
<rect x="30" y="166" width="1" height="23" fill="#FF3C3C"/>
<rect x="34" y="175" width="1" height="25" fill="#54FCFC"/>
<rect x="38" y="176" width="1" height="22" fill="#FF3C3C"/>
<rect x="41" y="182" width="1" height="23" fill="#54FCFC"/>
<rect x="45" y="133" width="1" height="70" fill="#FF3C3C"/>
<rect x="49" y="77" width="1" height="43" fill="#FF3C3C"/>
<rect x="52" y="87" width="1" height="39" fill="#54FCFC"/>
<rect x="56" y="71" width="1" height="43" fill="#FF3C3C"/>
<rect x="59" y="49" width="1" height="51" fill="#FF3C3C"/>
<rect x="63" y="57" width="1" height="33" fill="#FF3C3C"/>
<rect x="67" y="65" width="1" height="41" fill="#54FCFC"/>
<rect x="71" y="90" width="1" height="28" fill="#FF3C3C"/>
<rect x="74" y="95" width="1" height="18" fill="#54FCFC"/>
<rect x="78" y="102" width="1" height="23" fill="#54FCFC"/>
<rect x="81" y="110" width="1" height="34" fill="#54FCFC"/>
<rect x="85" y="101" width="1" height="41" fill="#FF3C3C"/>
<rect x="89" y="106" width="1" height="32" fill="#FF3C3C"/>
<rect x="92" y="112" width="1" height="24" fill="#54FCFC"/>
<rect x="96" y="103" width="1" height="23" fill="#FF3C3C"/>
<rect x="99" y="110" width="1" height="22" fill="#54FCFC"/>
<rect x="103" y="75" width="1" height="46" fill="#54FCFC"/>
<rect x="107" y="132" width="1" height="17" fill="#54FCFC"/>
<rect x="110" y="137" width="1" height="10" fill="#54FCFC"/>
<rect x="114" y="141" width="1" height="20" fill="#FF3C3C"/>
<rect x="118" y="137" width="1" height="9" fill="#FF3C3C"/>
<rect x="121" y="134" width="1" height="9" fill="#54FCFC"/>
<rect x="125" y="137" width="1" height="14" fill="#54FCFC"/>
<rect x="129" y="143" width="1" height="12" fill="#54FCFC"/>
<rect x="132" y="150" width="1" height="11" fill="#54FCFC"/>
<rect x="136" y="152" width="1" height="13" fill="#54FCFC"/>
<rect x="139" y="117" width="1" height="51" fill="#54FCFC"/>
<rect x="143" y="156" width="1" height="20" fill="#54FCFC"/>
<rect x="147" y="160" width="1" height="10" fill="#FF3C3C"/>
<rect x="150" y="138" width="1" height="23" fill="#FF3C3C"/>
<rect x="154" y="148" width="1" height="13" fill="#54FCFC"/>
<rect x="158" y="157" width="1" height="22" fill="#54FCFC"/>
<rect x="161" y="138" width="1" height="29" fill="#FF3C3C"/>
<rect x="165" y="126" width="1" height="23" fill="#FF3C3C"/>
<rect x="168" y="128" width="1" height="25" fill="#FFFFFF"/>
<rect x="172" y="166" width="1" height="3" fill="#54FCFC"/>
<rect x="176" y="194" width="1" height="27" fill="#FF3C3C"/>
<rect x="179" y="193" width="1" height="53" fill="#FF3C3C"/>
<rect x="183" y="170" width="1" height="20" fill="#FF3C3C"/>
<rect x="187" y="137" width="1" height="47" fill="#FF3C3C"/>
<rect x="190" y="137" width="1" height="13" fill="#54FCFC"/>
<rect x="194" y="134" width="1" height="15" fill="#54FCFC"/>
<rect x="198" y="126" width="1" height="34" fill="#FF3C3C"/>
<rect x="201" y="131" width="1" height="13" fill="#FF3C3C"/>
<rect x="205" y="127" width="1" height="22" fill="#54FCFC"/>
<rect x="208" y="123" width="1" height="29" fill="#FF3C3C"/>
<rect x="212" y="124" width="1" height="11" fill="#54FCFC"/>
<rect x="216" y="113" width="1" height="16" fill="#54FCFC"/>
<rect x="219" y="124" width="1" height="13" fill="#54FCFC"/>
<rect x="223" y="115" width="1" height="13" fill="#54FCFC"/>
<rect x="227" y="129" width="1" height="19" fill="#54FCFC"/>
<rect x="230" y="114" width="1" height="33" fill="#FF3C3C"/>
<rect x="234" y="120" width="1" height="20" fill="#FF3C3C"/>
<rect x="238" y="124" width="1" height="16" fill="#54FCFC"/>
<rect x="241" y="122" width="1" height="23" fill="#54FCFC"/>
<rect x="245" y="138" width="1" height="11" fill="#54FCFC"/>
<rect x="248" y="133" width="1" height="20" fill="#FF3C3C"/>
<rect x="252" y="128" width="1" height="13" fill="#FF3C3C"/>
<rect x="256" y="119" width="1" height="19" fill="#54FCFC"/>
<rect x="259" y="107" width="1" height="31" fill="#FF3C3C"/>
<rect x="263" y="124" width="1" height="19" fill="#54FCFC"/>
<rect x="267" y="134" width="1" height="13" fill="#54FCFC"/>
<rect x="270" y="123" width="1" height="18" fill="#FF3C3C"/>
<rect x="274" y="113" width="1" height="15" fill="#FF3C3C"/>
<rect x="277" y="89" width="1" height="30" fill="#FF3C3C"/>
<rect x="281" y="67" width="1" height="28" fill="#54FCFC"/>
<rect x="285" y="75" width="1" height="21" fill="#54FCFC"/>
<rect x="288" y="84" width="1" height="16" fill="#54FCFC"/>
<rect x="292" y="79" width="1" height="25" fill="#FF3C3C"/>
<rect x="296" y="86" width="1" height="17" fill="#54FCFC"/>
<rect x="299" y="91" width="1" height="10" fill="#FF3C3C"/>
<rect x="303" y="80" width="1" height="10" fill="#FF3C3C"/>
<rect x="307" y="67" width="1" height="22" fill="#FF3C3C"/>
<rect x="310" y="72" width="1" height="17" fill="#54FCFC"/>
<rect x="314" y="81" width="1" height="16" fill="#54FCFC"/>
<rect x="317" y="92" width="1" height="19" fill="#54FCFC"/>
<rect x="321" y="91" width="1" height="14" fill="#FF3C3C"/>
<rect x="325" y="91" width="1" height="20" fill="#54FCFC"/>
<rect x="328" y="99" width="1" height="13" fill="#54FCFC"/>
<rect x="332" y="103" width="1" height="20" fill="#54FCFC"/>
<rect x="336" y="114" width="1" height="24" fill="#54FCFC"/>
<rect x="339" y="131" width="1" height="21" fill="#54FCFC"/>
<rect x="343" y="128" width="1" height="21" fill="#54FCFC"/>
<rect x="347" y="143" width="1" height="11" fill="#54FCFC"/>
<rect x="350" y="140" width="1" height="22" fill="#54FCFC"/>
<rect x="354" y="150" width="1" height="8" fill="#FF3C3C"/>
<rect x="357" y="145" width="1" height="5" fill="#FF3C3C"/>
<rect x="361" y="137" width="1" height="15" fill="#FF3C3C"/>
<rect x="365" y="124" width="1" height="20" fill="#FF3C3C"/>
<rect x="368" y="117" width="1" height="22" fill="#54FCFC"/>
<rect x="372" y="130" width="1" height="14" fill="#FF3C3C"/>
<rect x="376" y="136" width="1" height="10" fill="#FFFFFF"/>
<rect x="379" y="133" width="1" height="12" fill="#54FCFC"/>
<rect x="383" y="140" width="1" height="11" fill="#54FCFC"/>
<rect x="387" y="140" width="1" height="11" fill="#54FCFC"/>
<rect x="390" y="133" width="1" height="17" fill="#FF3C3C"/>
<rect x="394" y="115" width="1" height="24" fill="#54FCFC"/>
<rect x="397" y="132" width="1" height="11" fill="#FF3C3C"/>
<rect x="401" y="134" width="1" height="8" fill="#FF3C3C"/>
<rect x="405" y="129" width="1" height="10" fill="#FF3C3C"/>
<rect x="408" y="129" width="1" height="9" fill="#FF3C3C"/>
<rect x="412" y="131" width="1" height="7" fill="#54FCFC"/>
<rect x="416" y="133" width="1" height="14" fill="#54FCFC"/>
<rect x="419" y="130" width="1" height="12" fill="#FF3C3C"/>
<rect x="423" y="127" width="1" height="8" fill="#FF3C3C"/>
<rect x="426" y="119" width="1" height="14" fill="#FF3C3C"/>
<rect x="430" y="121" width="1" height="7" fill="#54FCFC"/>
<rect x="434" y="98" width="1" height="30" fill="#FF3C3C"/>
<rect x="437" y="110" width="1" height="24" fill="#54FCFC"/>
<rect x="441" y="110" width="1" height="24" fill="#FF3C3C"/>
<rect x="445" y="97" width="1" height="23" fill="#FF3C3C"/>
<rect x="448" y="102" width="1" height="17" fill="#54FCFC"/>
<rect x="452" y="113" width="1" height="16" fill="#54FCFC"/>
<rect x="456" y="111" width="1" height="16" fill="#54FCFC"/>
<rect x="459" y="113" width="1" height="21" fill="#54FCFC"/>
<rect x="463" y="115" width="1" height="17" fill="#FF3C3C"/>
<rect x="466" y="124" width="1" height="14" fill="#FF3C3C"/>
<rect x="470" y="115" width="1" height="9" fill="#54FCFC"/>
<rect x="474" y="121" width="1" height="14" fill="#54FCFC"/>
<rect x="477" y="113" width="1" height="18" fill="#FF3C3C"/>
<rect x="481" y="114" width="1" height="15" fill="#54FCFC"/>
<rect x="485" y="117" width="1" height="9" fill="#FF3C3C"/>
<rect x="488" y="100" width="1" height="22" fill="#FF3C3C"/>
<rect x="492" y="112" width="1" height="10" fill="#54FCFC"/>
<rect x="496" y="118" width="1" height="9" fill="#54FCFC"/>
<rect x="499" y="127" width="1" height="9" fill="#FF3C3C"/>
<rect x="503" y="118" width="1" height="9" fill="#FF3C3C"/>
<rect x="506" y="107" width="1" height="15" fill="#FF3C3C"/>
<rect x="510" y="116" width="1" height="14" fill="#FF3C3C"/>
<rect x="514" y="103" width="1" height="14" fill="#FF3C3C"/>
<rect x="517" y="101" width="1" height="15" fill="#FF3C3C"/>
<rect x="521" y="102" width="1" height="19" fill="#54FCFC"/>
<rect x="525" y="85" width="1" height="33" fill="#FF3C3C"/>
<rect x="528" y="88" width="1" height="33" fill="#54FCFC"/>
<rect x="532" y="113" width="1" height="30" fill="#54FCFC"/>
<rect x="536" y="98" width="1" height="34" fill="#FF3C3C"/>
<rect x="539" y="105" width="1" height="15" fill="#FF3C3C"/>
<rect x="543" y="107" width="1" height="30" fill="#54FCFC"/>
<rect x="546" y="124" width="1" height="33" fill="#54FCFC"/>
<rect x="550" y="141" width="1" height="24" fill="#FFFFFF"/>
<rect x="554" y="147" width="1" height="15" fill="#FF3C3C"/>
<rect x="557" y="80" width="1" height="74" fill="#FF3C3C"/>
<rect x="561" y="67" width="1" height="34" fill="#54FCFC"/>
<rect x="565" y="74" width="1" height="27" fill="#FF3C3C"/>
<rect x="568" y="84" width="1" height="18" fill="#FF3C3C"/>
<rect x="572" y="78" width="1" height="23" fill="#54FCFC"/>
<rect x="575" y="73" width="1" height="19" fill="#FF3C3C"/>
<rect x="579" y="68" width="1" height="16" fill="#54FCFC"/>
<rect x="583" y="76" width="1" height="15" fill="#54FCFC"/>
<rect x="586" y="76" width="1" height="45" fill="#54FCFC"/>
<rect x="590" y="109" width="1" height="18" fill="#54FCFC"/>
<rect x="594" y="115" width="1" height="25" fill="#54FCFC"/>
<rect x="597" y="132" width="1" height="35" fill="#54FCFC"/>
<rect x="601" y="130" width="1" height="33" fill="#FF3C3C"/>
<rect x="605" y="108" width="1" height="22" fill="#FF3C3C"/>
<rect x="608" y="113" width="1" height="18" fill="#FF3C3C"/>
<rect x="612" y="111" width="1" height="16" fill="#54FCFC"/>
<rect x="615" y="106" width="1" height="18" fill="#FF3C3C"/>
<rect x="619" y="104" width="1" height="22" fill="#54FCFC"/>
<rect x="623" y="109" width="1" height="9" fill="#54FCFC"/>
<rect x="626" y="131" width="1" height="21" fill="#FF3C3C"/>
<rect x="630" y="126" width="1" height="24" fill="#54FCFC"/>
<rect x="634" y="130" width="1" height="23" fill="#FF3C3C"/>
<rect x="637" y="130" width="1" height="10" fill="#54FCFC"/>
<rect x="641" y="133" width="1" height="30" fill="#54FCFC"/>
<rect x="645" y="148" width="1" height="24" fill="#54FCFC"/>
<rect x="648" y="160" width="1" height="11" fill="#FF3C3C"/>
<rect x="652" y="161" width="1" height="9" fill="#FF3C3C"/>
<rect x="655" y="157" width="1" height="11" fill="#FF3C3C"/>
<rect x="659" y="151" width="1" height="12" fill="#FF3C3C"/>
<rect x="663" y="175" width="1" height="21" fill="#FF3C3C"/>
<rect x="666" y="187" width="1" height="15" fill="#54FCFC"/>
<rect x="670" y="196" width="1" height="10" fill="#54FCFC"/>
<rect x="674" y="201" width="1" height="17" fill="#54FCFC"/>
<rect x="677" y="201" width="1" height="18" fill="#FF3C3C"/>
<rect x="681" y="202" width="1" height="13" fill="#54FCFC"/>
<rect x="684" y="197" width="1" height="14" fill="#FF3C3C"/>
<rect x="688" y="200" width="1" height="14" fill="#FF3C3C"/>
<rect x="692" y="207" width="1" height="4" fill="#54FCFC"/>
<rect x="695" y="202" width="1" height="13" fill="#54FCFC"/>
<rect x="699" y="205" width="1" height="10" fill="#FF3C3C"/>
<rect x="703" y="198" width="1" height="11" fill="#FF3C3C"/>
<rect x="706" y="188" width="1" height="15" fill="#FF3C3C"/>
<rect x="710" y="190" width="1" height="13" fill="#54FCFC"/>
<rect x="714" y="196" width="1" height="8" fill="#54FCFC"/>
<rect x="717" y="200" width="1" height="14" fill="#54FCFC"/>
<rect x="721" y="200" width="1" height="10" fill="#FF3C3C"/>
<rect x="724" y="196" width="1" height="15" fill="#54FCFC"/>
<rect x="728" y="172" width="1" height="37" fill="#FF3C3C"/>
<rect x="732" y="183" width="1" height="20" fill="#54FCFC"/>
<rect x="735" y="186" width="1" height="12" fill="#FF3C3C"/>
<rect x="739" y="188" width="1" height="11" fill="#54FCFC"/>
<rect x="743" y="184" width="1" height="12" fill="#FF3C3C"/>
<rect x="746" y="177" width="1" height="17" fill="#FF3C3C"/>
<rect x="750" y="169" width="1" height="25" fill="#54FCFC"/>
<rect x="754" y="186" width="1" height="11" fill="#54FCFC"/>
<rect x="757" y="184" width="1" height="14" fill="#FF3C3C"/>
<rect x="761" y="183" width="1" height="9" fill="#54FCFC"/>
<rect x="764" y="188" width="1" height="15" fill="#54FCFC"/>
<rect x="768" y="197" width="1" height="10" fill="#FF3C3C"/>
<rect x="772" y="187" width="1" height="14" fill="#54FCFC"/>
<rect x="775" y="200" width="1" height="9" fill="#54FCFC"/>
<rect x="779" y="202" width="1" height="11" fill="#FF3C3C"/>
<rect x="783" y="207" width="1" height="12" fill="#54FCFC"/>
<rect x="786" y="209" width="1" height="11" fill="#FF3C3C"/>
<rect x="790" y="190" width="1" height="22" fill="#FF3C3C"/>
<rect x="794" y="202" width="1" height="9" fill="#FF3C3C"/>
<rect x="797" y="193" width="1" height="18" fill="#FF3C3C"/>
<rect x="801" y="174" width="1" height="30" fill="#FF3C3C"/>
<rect x="804" y="183" width="1" height="15" fill="#54FCFC"/>
<rect x="808" y="193" width="1" height="9" fill="#54FCFC"/>
<rect x="812" y="191" width="1" height="15" fill="#54FCFC"/>
<rect x="815" y="200" width="1" height="7" fill="#54FCFC"/>
<rect x="819" y="199" width="1" height="6" fill="#54FCFC"/>
<rect x="823" y="196" width="1" height="10" fill="#54FCFC"/>
<rect x="826" y="205" width="1" height="10" fill="#54FCFC"/>
<rect x="830" y="209" width="1" height="7" fill="#FF3C3C"/>
<rect x="833" y="208" width="1" height="13" fill="#54FCFC"/>
<rect x="837" y="178" width="1" height="37" fill="#FF3C3C"/>
<rect x="841" y="164" width="1" height="27" fill="#FF3C3C"/>
<rect x="844" y="169" width="1" height="16" fill="#54FCFC"/>
<rect x="848" y="163" width="1" height="21" fill="#FF3C3C"/>
<rect x="852" y="150" width="1" height="30" fill="#FF3C3C"/>
<rect x="855" y="124" width="1" height="27" fill="#FF3C3C"/>
<rect x="859" y="105" width="1" height="30" fill="#54FCFC"/>
<rect x="863" y="97" width="1" height="40" fill="#54FCFC"/>
<rect x="866" y="125" width="1" height="22" fill="#54FCFC"/>
<rect x="870" y="145" width="1" height="23" fill="#54FCFC"/>
<rect x="873" y="147" width="1" height="26" fill="#FF3C3C"/>
<rect x="877" y="155" width="1" height="19" fill="#54FCFC"/>
<rect x="881" y="153" width="1" height="26" fill="#FF3C3C"/>
<rect x="884" y="164" width="1" height="10" fill="#54FCFC"/>
<rect x="888" y="161" width="1" height="11" fill="#FF3C3C"/>
<rect x="892" y="161" width="1" height="27" fill="#54FCFC"/>
<rect x="895" y="169" width="1" height="30" fill="#FF3C3C"/>
<rect x="899" y="178" width="1" height="17" fill="#54FCFC"/>
<rect x="903" y="186" width="1" height="21" fill="#54FCFC"/>
<rect x="906" y="196" width="1" height="11" fill="#54FCFC"/>
<rect x="910" y="189" width="1" height="37" fill="#FF3C3C"/>
<rect x="913" y="201" width="1" height="12" fill="#FF3C3C"/>
<rect x="917" y="196" width="1" height="11" fill="#FF3C3C"/>
<rect x="921" y="195" width="1" height="10" fill="#FF3C3C"/>
<rect x="924" y="194" width="1" height="8" fill="#54FCFC"/>
<rect x="928" y="195" width="1" height="7" fill="#FFFFFF"/>
<rect x="932" y="192" width="1" height="8" fill="#FFFFFF"/>
<rect x="935" y="194" width="1" height="5" fill="#54FCFC"/>
<rect x="939" y="197" width="1" height="9" fill="#54FCFC"/>
<rect x="942" y="203" width="1" height="8" fill="#54FCFC"/>
<rect x="946" y="205" width="1" height="11" fill="#54FCFC"/>
<rect x="950" y="210" width="1" height="9" fill="#54FCFC"/>
<rect x="953" y="214" width="1" height="12" fill="#54FCFC"/>
<rect x="957" y="218" width="1" height="8" fill="#FF3C3C"/>
<rect x="961" y="220" width="1" height="25" fill="#54FCFC"/>
<rect x="964" y="238" width="1" height="26" fill="#54FCFC"/>
<rect x="968" y="256" width="1" height="12" fill="#FF3C3C"/>
<rect x="972" y="253" width="1" height="13" fill="#54FCFC"/>
<rect x="975" y="245" width="1" height="17" fill="#FF3C3C"/>
<rect x="979" y="245" width="1" height="18" fill="#FF3C3C"/>
<rect x="982" y="235" width="1" height="14" fill="#54FCFC"/>
<rect x="986" y="243" width="1" height="8" fill="#54FCFC"/>
<rect x="990" y="242" width="1" height="10" fill="#FF3C3C"/>
<rect x="993" y="239" width="1" height="14" fill="#54FCFC"/>
<rect x="997" y="248" width="1" height="10" fill="#FF3C3C"/>
<rect x="1001" y="220" width="1" height="30" fill="#FF3C3C"/>
<rect x="1004" y="237" width="1" height="13" fill="#54FCFC"/>
<rect x="1008" y="242" width="1" height="12" fill="#54FCFC"/>
<rect x="1012" y="247" width="1" height="16" fill="#54FCFC"/>
<rect x="1015" y="265" width="1" height="38" fill="#54FCFC"/>
<rect x="1019" y="279" width="1" height="17" fill="#FF3C3C"/>
<rect x="1022" y="265" width="1" height="13" fill="#FF3C3C"/>
<rect x="1026" y="258" width="1" height="27" fill="#54FCFC"/>
<rect x="1030" y="265" width="1" height="25" fill="#FF3C3C"/>
<rect x="1033" y="243" width="1" height="30" fill="#FF3C3C"/>
<rect x="1037" y="245" width="1" height="18" fill="#54FCFC"/>
<rect x="1041" y="249" width="1" height="8" fill="#FF3C3C"/>
<rect x="1044" y="244" width="1" height="10" fill="#FF3C3C"/>
<rect x="1048" y="250" width="1" height="18" fill="#54FCFC"/>
<rect x="1052" y="262" width="1" height="11" fill="#54FCFC"/>
<rect x="1055" y="245" width="1" height="15" fill="#FF3C3C"/>
<rect x="1059" y="247" width="1" height="16" fill="#54FCFC"/>
<polygon points="1,260 5,264 10,268 15,271 18,272 18,271 15,272 6,274.5 1,273" fill="#003468" stroke="#003468" stroke-width="1" vector-effect="non-scaling-stroke"/>
<polygon points="1,273 6,274.5 15,272 18,270 19,271.5 15,275 10,278 5,279.5 1,279" fill="#C87800" stroke="#C87800" stroke-width="1" vector-effect="non-scaling-stroke"/>
<polygon points="21.5,270 25,260 29,250 34,240 36,236 41,225 44,218 49.1,196 51,185 52.2,178.3 53.3,172.7 54.9,166 56.6,161 59,153 61,145 65,132 70,120 74,112 77,105 79,99 79,97 82,99.5 85,102 90,105 94,109 98,114 101,118 104,121 104,122 101,124 98,127 94,132 89,140 85,149 80,160 75,171 70,183 65,194 62,200 59,209 56,218 52,228 48,238 43,248 37,255 30,263 24,270" fill="#B83400" stroke="#B83400" stroke-width="1" vector-effect="non-scaling-stroke"/>
<polygon points="19,271 21,260 23,250 26,241 28,230 30.5,218 33.7,205 37.6,195.5 38.9,194 42.7,187.7 45,183.8 46,177 47.2,171 48.3,166.6 49.4,161 51,150 53,140 54,136 57,116 59,102 61,93 64,88 65,87 68,87.6 71,88.5 76,94 79,97 79,99 77,105 74,112 70,120 65,132 61,145 59,153 56.6,161 54.9,166 53.3,172.7 52.2,178.3 51,185 49.1,196 44,218 41,225 36,236 34,240 29,250 25,260 21.5,270" fill="#C87800" stroke="#C87800" stroke-width="1" vector-effect="non-scaling-stroke"/>
<polygon points="79,97 82,99.5 85,102 90,105 94,109 98,114 101,118 104,121 104,122 101,123.5 98,125 95,125.5 90,122 85,117 81,110 79,99" fill="#0C6CA4" stroke="#0C6CA4" stroke-width="1" vector-effect="non-scaling-stroke"/>
<polygon points="104,121 105,120.5 110,117 115,115 120,115.5 125,118 130,123 135,128 140,134 145,138 150,141.5 155,143.5 160,146 165,148 170,152 175,156 180,160 185,162.5 190,165 194,165.5 193,168 190,169.5 185,169.5 180,169 177,167 174,164 171,160 169,154 167,151.5 163,154 159,158 155,156 150,154 145,151.5 140,149 135,145 130,139 125,134 120,130.5 115,129.5 110,127 105,122 104,122" fill="#003468" stroke="#003468" stroke-width="1" vector-effect="non-scaling-stroke"/>
<polygon points="104,122 105,122 110,127 115,129.5 120,130.5 125,134 130,139 135,145 140,149 145,151.5 150,154 155,156 159,158 163,154 167,151.5 169,154 171,160 174,164 177,167 180,169 185,169.5 190,169.5 193,168 194,165.5 193,168.5 192,172 190,181 188,190 184,191 182,189 179,183 176,175 173,167 170,159 165,157 159,158.5 155,161 150,162 145,160.5 140,156 135,149 130,142 125,138 120,138 115,136 110,130 105,121.5 104,122.5" fill="#0C6CA4" stroke="#0C6CA4" stroke-width="1" vector-effect="non-scaling-stroke"/>
<polygon points="159,158 163,154 167,151.5 169,154 171,159.5 170,159 165,157 159,158.5" fill="#C87800" stroke="#C87800" stroke-width="1" vector-effect="non-scaling-stroke"/>
<polygon points="206,167.5 208,161 212,152 216,144 219,138 222,136 226,136 230,135 235,134.5 238,133.5 243,134 248,136 254,137.5 257,136 257,137 254,139 250,143 246,146.5 243,150 240,150.5 232,151.5 226,153.5 220,155 212,159 207,164 206,167.5" fill="#B83400" stroke="#B83400" stroke-width="1" vector-effect="non-scaling-stroke"/>
<polygon points="193,169 195,161 197,154 200,147 203,143.5 207,141 212,137 217,133 221,129 223,128.5 226,132 229,134 232,133.5 235,134.5 235,134.5 230,135 226,136 222,136 219,138 216,144 212,152 208,161 206,167.5 200,168 193,169.5" fill="#C87800" stroke="#C87800" stroke-width="1" vector-effect="non-scaling-stroke"/>
<polygon points="235,134.5 238,133.5 243,134 248,136 254,137.5 257,136 257,137 254,138 250,138.5 245,139 240,138 236,135" fill="#0C6CA4" stroke="#0C6CA4" stroke-width="1" vector-effect="non-scaling-stroke"/>
<polygon points="275,132 279,128 283,123 287,117 293,112 299,106 305,98 310,91 313.5,89 319,92 321.5,94 325,100 328,104 329,105 328,103.5 323,105 317,108 311,112 305,116 299,120 293,124 287,126.5 281,129 275,132.5" fill="#B83400" stroke="#B83400" stroke-width="1" vector-effect="non-scaling-stroke"/>
<polygon points="257,135 260,133 269,133 273,131 276,128 279,120 282,110 285,103 289,97 293,92.5 305,91 310,88.5 313.5,87 316,88.5 319,92 319,92 313.5,89 310,91 305,98 299,106 293,112 287,117 283,123 279,128 275,132 272,134.5 267,136 257,137" fill="#C87800" stroke="#C87800" stroke-width="1" vector-effect="non-scaling-stroke"/>
<polygon points="338,102.5 345,103.5 350,107 355,111 360,115 365,118 370,121 375,124 380,128 385,132 390,136 395,139 399,141 402,142 402,142 395,140 390,139.5 384,141 385,144 382,144.5 375,144.5 368,144 366,143.5 363,142 359,138.5 355,134 351,128 347,121 343,113 338,102.5" fill="#003468" stroke="#003468" stroke-width="1" vector-effect="non-scaling-stroke"/>
<polygon points="319,92 323,93 329,95 334,99 338,102.5 343,113 347,121 351,128 355,134 359,138.5 363,142 366,143.5 368,144 375,144.5 382,144.5 385,144 384,141 390,139.5 395,140 402,142 402,142.5 395,144 391,145.5 385,144.5 382,144.5 375,144.5 368,144 367,144 363,149 358,150 354,148 350,142 345,134 340,123 335,112 332,108 329,105 329,105 328,104 325,100 321.5,94 319,92" fill="#0C6CA4" stroke="#0C6CA4" stroke-width="1" vector-effect="non-scaling-stroke"/>
<polygon points="367,143.5 371,140 375,137.5 378,136.5 381,138.5 384,142 385,144 382,144.5 375,144.5 368,144" fill="#C87800" stroke="#C87800" stroke-width="1" vector-effect="non-scaling-stroke"/>
<polygon points="403,142.5 405,142.5 415,141.5 420,139.5 425,137 430,134 435,131 440,128.5 445,125.5 450,122 455,120 459,119.5 460,120 465,123.5 470,125.5 472,125.5 470,126 465,126.5 460,128 455,129.5 450,131 445,133 440,135 435,136.5 430,138 425,140 420,142 415,142.8 403,142.5" fill="#B83400" stroke="#B83400" stroke-width="1" vector-effect="non-scaling-stroke"/>
<polygon points="402,141.5 407,138 415,137 420,136 425,133 430,129 435,124 440,120 445,119 450,118 456,117 458,119 460,120 460,120 459,119.5 455,120 450,122 445,125.5 440,128.5 435,131 430,134 425,137 420,139.5 415,141.5 405,142.5 403,142.5" fill="#C87800" stroke="#C87800" stroke-width="1" vector-effect="non-scaling-stroke"/>
<polygon points="460,120 465,120.5 470,121 475,121.5 480,122.5 485,123 488,123.5 488,124.5 485,126 480,126.8 475,126.5 470,125.5 465,123.5 460,121" fill="#0C6CA4" stroke="#0C6CA4" stroke-width="1" vector-effect="non-scaling-stroke"/>
<polygon points="488,123.5 492,122 500,122 505,122.5 506,123 506,123.5 504,124.5 496,125 488,125" fill="#C87800" stroke="#C87800" stroke-width="1" vector-effect="non-scaling-stroke"/>
<polygon points="505,122.5 510,122 510,123.5 506,124" fill="#0C6CA4" stroke="#0C6CA4" stroke-width="1" vector-effect="non-scaling-stroke"/>
<polygon points="510,123 516,121.3 518,119.5 523,118 526,117 530,116.5 536,115.8 538.5,116.5 540,120 540,120.8 523,121 516,121.5 510,123.2" fill="#B83400" stroke="#B83400" stroke-width="1" vector-effect="non-scaling-stroke"/>
<polygon points="510,123 514,119 518,115 522,113 526,109.5 528,110 532,113.5 536,115.5 538.5,116.5 538.5,116.5 536,115.8 530,116.5 526,117 523,118 518,119.5 516,121.3 510,123" fill="#C87800" stroke="#C87800" stroke-width="1" vector-effect="non-scaling-stroke"/>
<polygon points="537.5,115.5 541,115 544,118 548,122 553,126 557,123 560,121 562,124 562,125 559,130 557,136 554,140 550,134 546,128 543,124 540,120" fill="#0C6CA4" stroke="#0C6CA4" stroke-width="1" vector-effect="non-scaling-stroke"/>
<polygon points="548,123 553,126.4 558,123 560,126 558,130 555,134 552,131 550,129" fill="#003468" stroke="#003468" stroke-width="1" vector-effect="non-scaling-stroke"/>
<polygon points="562,125 565,115 568,104 571,95 575,89 579,84.5 583,84 586,89 588,92.5 588,93.5 585,99 580,107 575,114 571,116.5 567,120 562,125" fill="#C87800" stroke="#C87800" stroke-width="1" vector-effect="non-scaling-stroke"/>
<polygon points="575,114 580,107 585,99 588,93.5 590,98 592,103 594,108 595,111.5 593,110.8 587,110.5 581,111" fill="#B83400" stroke="#B83400" stroke-width="1" vector-effect="non-scaling-stroke"/>
<polygon points="588,92.5 592,94.5 595,98 597,102 600,105 603,108.5 606,111.5 609,113.5 612,115 614,119 615,121 615,122 614,125 613,129 610,132 607,133 604,132 601,129.5 599,125 597,119 595,111.5 594,108 592,103 590,98 588,93.5" fill="#0C6CA4" stroke="#0C6CA4" stroke-width="1" vector-effect="non-scaling-stroke"/>
<polygon points="612,115 615,113.5 619,112 623,110 626,109 629,111 633,114 637,117 641,120 645,123.5 649,129 653,134 657,137.5 660,139 664,142 670,148 676,154 682,162 688,169.5 690,172 695,178 700,182.5 705,186 710,191 715,195 720,197 725,199.5 728,200.5 728,200.5 720,201 714,202.5 708,205 703,208 703,207 696,202 690,197 686,196.5 682,199 678,194 674,186 670,176 666,167 662,160 658,154 652,148 648,140 645,135 642,131 638,128 635,126 631,125.5 630,124 627,120 624,117.5 620,117.5 617,119 615,121 614,119 612,115" fill="#003468" stroke="#003468" stroke-width="1" vector-effect="non-scaling-stroke"/>
<polygon points="630,124 631,125.5 635,126 638,128 642,131 645,135 648,140 652,148 658,154 662,160 666,167 670,176 674,186 678,194 682,199 686,196.5 690,197 696,202 703,207 703,209 700,209 694,209 688,209 682,207 677,202 673,192 669,182 665,172 661,166 656,165 650,159 646,154 642,147 638,140 635,135 632,131 630,128" fill="#0C6CA4" stroke="#0C6CA4" stroke-width="1" vector-effect="non-scaling-stroke"/>
<polygon points="615,122 615,121 617,119 620,117.5 624,117.5 627,120 630,124 630,125 629,127.5 625,125 619,123" fill="#C87800" stroke="#C87800" stroke-width="1" vector-effect="non-scaling-stroke"/>
<polygon points="731,202.5 738,199.5 744,198 750,196 756,194 760,192 765,191 770,192.5 773,195 773,195 770,197 762,197 756,197.5 750,200 744,203.5 731,203.5" fill="#B83400" stroke="#B83400" stroke-width="1" vector-effect="non-scaling-stroke"/>
<polygon points="703,208 708,205 714,202.5 720,201 728,200 732,198.5 738,196.5 744,194.5 750,192.5 755,190 760,188 762,189 765,191 769,191.5 770,192.5 770,192.5 765,191 760,192 756,194 750,196 744,198 738,199.5 731,202.5 731,203.5 724,204.5 717,205 710,206 703,209" fill="#C87800" stroke="#C87800" stroke-width="1" vector-effect="non-scaling-stroke"/>
<polygon points="769,192 773,193 778,195 783,198 790,198.5 800,198.5 800,204.5 798,208 795,210.5 790,210.5 785,208 781,205 777,201 773,197 770,193" fill="#0C6CA4" stroke="#0C6CA4" stroke-width="1" vector-effect="non-scaling-stroke"/>
<polygon points="783,198.5 790,198.5 800,198.5 800,201.5 790,201.5 787,201 783,198.5" fill="#003468" stroke="#003468" stroke-width="1" vector-effect="non-scaling-stroke"/>
<polygon points="800,204 804,199 809,197 814,197 818,199 820,202 820,204.5 800,205" fill="#C87800" stroke="#C87800" stroke-width="1" vector-effect="non-scaling-stroke"/>
<polygon points="820,201 826,202 832,204 838,205 839,205 837,209 834,212 830,210 826,207 820,204" fill="#0C6CA4" stroke="#0C6CA4" stroke-width="1" vector-effect="non-scaling-stroke"/>
<polygon points="840,204.4 848,199 855,190 859,181 863,172 866,165 869,159 870,158 873,156 877.5,154 879,159 882,165 886,169 891,171 891,171 888,173 885,175 880,178 873,180 866,183 861,190 858,193 852,199 846,201 840,205" fill="#B83400" stroke="#B83400" stroke-width="1" vector-effect="non-scaling-stroke"/>
<polygon points="840,204 844,196 847,190 851,179 855,167 859,155 863,144 866,138 869,137 872,142 875,148 877.5,153.5 877.5,154 873,156 870,158 869,159 866,165 863,172 859,181 855,190 848,199 840,204.4" fill="#C87800" stroke="#C87800" stroke-width="1" vector-effect="non-scaling-stroke"/>
<polygon points="899,170.5 903,169.5 907,169 912,170 918,172 923,175 928,179 933,184 938,189 944,194 950,199 956,203 962,208 966,212 971,216 978,220 985,224 992,229 999,232.5 1003,235 1007,238 1012,242 1015,245 1020,249 1026,254 1032,258 1037,258 1043,257 1043,257 1040,262 1037,266 1034,266 1032,265 1026,261 1020,256 1014,250 1010,245 1006,244 1002,245.5 997,246 992,246 988,247 984,244 979,240 974,234 970,228 967,223 963,215 956,210 950,206 944,202 934,199 930,198 924,195 918,192 914,188 910,184 907,181 904,177 901,173 899,170" fill="#003468" stroke="#003468" stroke-width="1" vector-effect="non-scaling-stroke"/>
<polygon points="877.5,153.5 880,152 885,152 888,153.5 891,157 894,162 897,167 899,170 901,173 904,177 907,181 910,184 914,188 918,192 924,195 930,198 934,199 944,202 950,206 956,210 963,215 967,223 970,228 974,234 979,240 984,244 988,247 992,246 997,246 1002,245.5 1006,244 1010,245 1014,250 1020,256 1026,261 1032,265 1034,266 1037,266 1037,266 1035,269 1033,274 1030,280 1027,280 1024,276 1020,269 1017,262 1014,255 1011,248 1010,245 1006,244 1002,245.5 997,246 992,246 990,247 988,249 984,252.5 979,256 974,252 970,244 965,233 960,223 954,215 950,212 946,208 944,202 934,199 930,200 926,202 921,204 916,204 912,201 908,196 903,190 900,187 896,182 893,177 891,171 886,169 882,165 879,159 877.5,154" fill="#0C6CA4" stroke="#0C6CA4" stroke-width="1" vector-effect="non-scaling-stroke"/>
<polygon points="928,199.6 934,199 940,200 942,202 938,202.4 930,201.6" fill="#C87800" stroke="#C87800" stroke-width="1" vector-effect="non-scaling-stroke"/>
<polygon points="989,248 992,246 997,246 1002,245.5 1006,244 1009,244.5 1010,246.5 1006,247 1001,249.5 997,252 992,251 989,248.5" fill="#C87800" stroke="#C87800" stroke-width="1" vector-effect="non-scaling-stroke"/>
<polygon points="1037,266 1040,262 1043,257 1046,256 1050,256.5 1054,257 1058,256 1059.5,258 1059.5,259.5 1056,261 1052,264 1049,267 1045,267.7 1040,267.5 1037,266.5" fill="#C87800" stroke="#C87800" stroke-width="1" vector-effect="non-scaling-stroke"/>
</g>
<polyline points="1,619.5 10,619.5 18,619.5 24,619.5 35,618.5 51,618.5 60,618.5 70,617.5 77,617.5 83,617.5 100,616.5 120,615.5 140,615.5 152,614.5 166,614.5 180,614.5 191,613.5 200,613.5 210,613.5 220,613.5 230,613.5 240,612.5 254,612.5 263,612.5 280,612.5 300,612.5 326,612.5 335,612.5 351,612.5 363,612.5 375,611.5 387,611.5 395,611.5 405,611.5 415,611.5 425,610.5 435,610.5 440,610.5 450,610.5 459,610.5 465,610.5 473,610.5 476,610.5 483,610.5 485,610.5 497,610.5 499,610.5 555,610.5 565,610.5 575,609.5 585,609.5 595,609.5 612,609.5 615,609.5 625,609.5 645,609.5 655,609.5 668,609.5 680,609.5 720,610.5 760,611.5 800,611.5 826,611.5 836,611.5 847,611.5 870,611.5 886,611.5 894,612.5 910,612.5 930,612.5 949,612.5 966,613.5 986,613.5 1006,613.5 1026,614.5 1046,614.5 1059,615.5" fill="none" stroke="#FF8000" stroke-width="1"/>
<rect x="1" y="619" width="1" height="1" fill="#54FCFC"/>
<rect x="5" y="620" width="1" height="1" fill="#54FCFC"/>
<rect x="9" y="619" width="1" height="1" fill="#FF3C3C"/>
<rect x="12" y="619" width="1" height="1" fill="#FF3C3C"/>
<rect x="16" y="619" width="1" height="1" fill="#54FCFC"/>
<rect x="19" y="618" width="1" height="1" fill="#FF3C3C"/>
<rect x="23" y="616" width="1" height="1" fill="#FF3C3C"/>
<rect x="27" y="615" width="1" height="1" fill="#FF3C3C"/>
<rect x="30" y="613" width="1" height="1" fill="#FF3C3C"/>
<rect x="34" y="614" width="1" height="1" fill="#54FCFC"/>
<rect x="38" y="614" width="1" height="1" fill="#FF3C3C"/>
<rect x="41" y="614" width="1" height="1" fill="#54FCFC"/>
<rect x="45" y="613" width="1" height="1" fill="#FF3C3C"/>
<rect x="49" y="608" width="1" height="1" fill="#FF3C3C"/>
<rect x="52" y="608" width="1" height="1" fill="#54FCFC"/>
<rect x="56" y="608" width="1" height="1" fill="#FF3C3C"/>
<rect x="59" y="606" width="1" height="1" fill="#FF3C3C"/>
<rect x="63" y="606" width="1" height="1" fill="#FF3C3C"/>
<rect x="67" y="607" width="1" height="1" fill="#54FCFC"/>
<rect x="71" y="608" width="1" height="1" fill="#FF3C3C"/>
<rect x="74" y="608" width="1" height="1" fill="#54FCFC"/>
<rect x="78" y="609" width="1" height="1" fill="#54FCFC"/>
<rect x="81" y="610" width="1" height="1" fill="#54FCFC"/>
<rect x="85" y="609" width="1" height="1" fill="#FF3C3C"/>
<rect x="89" y="609" width="1" height="1" fill="#FF3C3C"/>
<rect x="92" y="609" width="1" height="1" fill="#54FCFC"/>
<rect x="96" y="609" width="1" height="1" fill="#FF3C3C"/>
<rect x="99" y="609" width="1" height="1" fill="#54FCFC"/>
<rect x="103" y="608" width="1" height="1" fill="#54FCFC"/>
<rect x="107" y="610" width="1" height="1" fill="#54FCFC"/>
<rect x="110" y="610" width="1" height="1" fill="#54FCFC"/>
<rect x="114" y="611" width="1" height="1" fill="#FF3C3C"/>
<rect x="118" y="610" width="1" height="1" fill="#FF3C3C"/>
<rect x="121" y="610" width="1" height="1" fill="#54FCFC"/>
<rect x="125" y="611" width="1" height="1" fill="#54FCFC"/>
<rect x="129" y="611" width="1" height="1" fill="#54FCFC"/>
<rect x="132" y="611" width="1" height="1" fill="#54FCFC"/>
<rect x="136" y="612" width="1" height="1" fill="#54FCFC"/>
<rect x="139" y="611" width="1" height="1" fill="#54FCFC"/>
<rect x="143" y="612" width="1" height="1" fill="#54FCFC"/>
<rect x="147" y="612" width="1" height="1" fill="#FF3C3C"/>
<rect x="150" y="611" width="1" height="1" fill="#FF3C3C"/>
<rect x="154" y="611" width="1" height="1" fill="#54FCFC"/>
<rect x="158" y="612" width="1" height="1" fill="#54FCFC"/>
<rect x="161" y="611" width="1" height="1" fill="#FF3C3C"/>
<rect x="165" y="610" width="1" height="1" fill="#FF3C3C"/>
<rect x="168" y="610" width="1" height="1" fill="#FFFFFF"/>
<rect x="172" y="612" width="1" height="1" fill="#54FCFC"/>
<rect x="176" y="615" width="1" height="1" fill="#FF3C3C"/>
<rect x="179" y="616" width="1" height="1" fill="#FF3C3C"/>
<rect x="183" y="613" width="1" height="1" fill="#FF3C3C"/>
<rect x="187" y="612" width="1" height="1" fill="#FF3C3C"/>
<rect x="190" y="611" width="1" height="1" fill="#54FCFC"/>
<rect x="194" y="610" width="1" height="1" fill="#54FCFC"/>
<rect x="198" y="611" width="1" height="1" fill="#FF3C3C"/>
<rect x="201" y="610" width="1" height="1" fill="#FF3C3C"/>
<rect x="205" y="610" width="1" height="1" fill="#54FCFC"/>
<rect x="208" y="610" width="1" height="1" fill="#FF3C3C"/>
<rect x="212" y="610" width="1" height="1" fill="#54FCFC"/>
<rect x="216" y="609" width="1" height="1" fill="#54FCFC"/>
<rect x="219" y="610" width="1" height="1" fill="#54FCFC"/>
<rect x="223" y="609" width="1" height="1" fill="#54FCFC"/>
<rect x="227" y="610" width="1" height="1" fill="#54FCFC"/>
<rect x="230" y="610" width="1" height="1" fill="#FF3C3C"/>
<rect x="234" y="610" width="1" height="1" fill="#FF3C3C"/>
<rect x="238" y="610" width="1" height="1" fill="#54FCFC"/>
<rect x="241" y="610" width="1" height="1" fill="#54FCFC"/>
<rect x="245" y="611" width="1" height="1" fill="#54FCFC"/>
<rect x="248" y="611" width="1" height="1" fill="#FF3C3C"/>
<rect x="252" y="610" width="1" height="1" fill="#FF3C3C"/>
<rect x="256" y="610" width="1" height="1" fill="#54FCFC"/>
<rect x="259" y="609" width="1" height="1" fill="#FF3C3C"/>
<rect x="263" y="610" width="1" height="1" fill="#54FCFC"/>
<rect x="267" y="610" width="1" height="1" fill="#54FCFC"/>
<rect x="270" y="610" width="1" height="1" fill="#FF3C3C"/>
<rect x="274" y="609" width="1" height="1" fill="#FF3C3C"/>
<rect x="277" y="608" width="1" height="1" fill="#FF3C3C"/>
<rect x="281" y="607" width="1" height="1" fill="#54FCFC"/>
<rect x="285" y="607" width="1" height="1" fill="#54FCFC"/>
<rect x="288" y="607" width="1" height="1" fill="#54FCFC"/>
<rect x="292" y="607" width="1" height="1" fill="#FF3C3C"/>
<rect x="296" y="607" width="1" height="1" fill="#54FCFC"/>
<rect x="299" y="607" width="1" height="1" fill="#FF3C3C"/>
<rect x="303" y="607" width="1" height="1" fill="#FF3C3C"/>
<rect x="307" y="606" width="1" height="1" fill="#FF3C3C"/>
<rect x="310" y="606" width="1" height="1" fill="#54FCFC"/>
<rect x="314" y="607" width="1" height="1" fill="#54FCFC"/>
<rect x="317" y="608" width="1" height="1" fill="#54FCFC"/>
<rect x="321" y="608" width="1" height="1" fill="#FF3C3C"/>
<rect x="325" y="608" width="1" height="1" fill="#54FCFC"/>
<rect x="328" y="608" width="1" height="1" fill="#54FCFC"/>
<rect x="332" y="609" width="1" height="1" fill="#54FCFC"/>
<rect x="336" y="610" width="1" height="1" fill="#54FCFC"/>
<rect x="339" y="611" width="1" height="1" fill="#54FCFC"/>
<rect x="343" y="610" width="1" height="1" fill="#54FCFC"/>
<rect x="347" y="611" width="1" height="1" fill="#54FCFC"/>
<rect x="350" y="611" width="1" height="1" fill="#54FCFC"/>
<rect x="354" y="611" width="1" height="1" fill="#FF3C3C"/>
<rect x="357" y="611" width="1" height="1" fill="#FF3C3C"/>
<rect x="361" y="611" width="1" height="1" fill="#FF3C3C"/>
<rect x="365" y="610" width="1" height="1" fill="#FF3C3C"/>
<rect x="368" y="610" width="1" height="1" fill="#54FCFC"/>
<rect x="372" y="610" width="1" height="1" fill="#FF3C3C"/>
<rect x="376" y="610" width="1" height="1" fill="#FFFFFF"/>
<rect x="379" y="610" width="1" height="1" fill="#54FCFC"/>
<rect x="383" y="611" width="1" height="1" fill="#54FCFC"/>
<rect x="387" y="611" width="1" height="1" fill="#54FCFC"/>
<rect x="390" y="610" width="1" height="1" fill="#FF3C3C"/>
<rect x="394" y="610" width="1" height="1" fill="#54FCFC"/>
<rect x="397" y="610" width="1" height="1" fill="#FF3C3C"/>
<rect x="401" y="610" width="1" height="1" fill="#FF3C3C"/>
<rect x="405" y="610" width="1" height="1" fill="#FF3C3C"/>
<rect x="408" y="610" width="1" height="1" fill="#FF3C3C"/>
<rect x="412" y="610" width="1" height="1" fill="#54FCFC"/>
<rect x="416" y="610" width="1" height="1" fill="#54FCFC"/>
<rect x="419" y="610" width="1" height="1" fill="#FF3C3C"/>
<rect x="423" y="610" width="1" height="1" fill="#FF3C3C"/>
<rect x="426" y="609" width="1" height="1" fill="#FF3C3C"/>
<rect x="430" y="609" width="1" height="1" fill="#54FCFC"/>
<rect x="434" y="609" width="1" height="1" fill="#FF3C3C"/>
<rect x="437" y="609" width="1" height="1" fill="#54FCFC"/>
<rect x="441" y="609" width="1" height="1" fill="#FF3C3C"/>
<rect x="445" y="608" width="1" height="1" fill="#FF3C3C"/>
<rect x="448" y="608" width="1" height="1" fill="#54FCFC"/>
<rect x="452" y="609" width="1" height="1" fill="#54FCFC"/>
<rect x="456" y="609" width="1" height="1" fill="#54FCFC"/>
<rect x="459" y="609" width="1" height="1" fill="#54FCFC"/>
<rect x="463" y="609" width="1" height="1" fill="#FF3C3C"/>
<rect x="466" y="610" width="1" height="1" fill="#FF3C3C"/>
<rect x="470" y="609" width="1" height="1" fill="#54FCFC"/>
<rect x="474" y="610" width="1" height="1" fill="#54FCFC"/>
<rect x="477" y="609" width="1" height="1" fill="#FF3C3C"/>
<rect x="481" y="609" width="1" height="1" fill="#54FCFC"/>
<rect x="485" y="609" width="1" height="1" fill="#FF3C3C"/>
<rect x="488" y="609" width="1" height="1" fill="#FF3C3C"/>
<rect x="492" y="609" width="1" height="1" fill="#54FCFC"/>
<rect x="496" y="609" width="1" height="1" fill="#54FCFC"/>
<rect x="499" y="610" width="1" height="1" fill="#FF3C3C"/>
<rect x="503" y="609" width="1" height="1" fill="#FF3C3C"/>
<rect x="506" y="609" width="1" height="1" fill="#FF3C3C"/>
<rect x="510" y="609" width="1" height="1" fill="#FF3C3C"/>
<rect x="514" y="608" width="1" height="1" fill="#FF3C3C"/>
<rect x="517" y="608" width="1" height="1" fill="#FF3C3C"/>
<rect x="521" y="609" width="1" height="1" fill="#54FCFC"/>
<rect x="525" y="608" width="1" height="1" fill="#FF3C3C"/>
<rect x="528" y="608" width="1" height="1" fill="#54FCFC"/>
<rect x="532" y="610" width="1" height="1" fill="#54FCFC"/>
<rect x="536" y="609" width="1" height="1" fill="#FF3C3C"/>
<rect x="539" y="609" width="1" height="1" fill="#FF3C3C"/>
<rect x="543" y="609" width="1" height="1" fill="#54FCFC"/>
<rect x="546" y="611" width="1" height="1" fill="#54FCFC"/>
<rect x="550" y="611" width="1" height="1" fill="#FFFFFF"/>
<rect x="554" y="611" width="1" height="1" fill="#FF3C3C"/>
<rect x="557" y="609" width="1" height="1" fill="#FF3C3C"/>
<rect x="561" y="607" width="1" height="1" fill="#54FCFC"/>
<rect x="565" y="607" width="1" height="1" fill="#FF3C3C"/>
<rect x="568" y="607" width="1" height="1" fill="#FF3C3C"/>
<rect x="572" y="607" width="1" height="1" fill="#54FCFC"/>
<rect x="575" y="607" width="1" height="1" fill="#FF3C3C"/>
<rect x="579" y="606" width="1" height="1" fill="#54FCFC"/>
<rect x="583" y="607" width="1" height="1" fill="#54FCFC"/>
<rect x="586" y="608" width="1" height="1" fill="#54FCFC"/>
<rect x="590" y="609" width="1" height="1" fill="#54FCFC"/>
<rect x="594" y="610" width="1" height="1" fill="#54FCFC"/>
<rect x="597" y="611" width="1" height="1" fill="#54FCFC"/>
<rect x="601" y="611" width="1" height="1" fill="#FF3C3C"/>
<rect x="605" y="609" width="1" height="1" fill="#FF3C3C"/>
<rect x="608" y="609" width="1" height="1" fill="#FF3C3C"/>
<rect x="612" y="609" width="1" height="1" fill="#54FCFC"/>
<rect x="615" y="609" width="1" height="1" fill="#FF3C3C"/>
<rect x="619" y="609" width="1" height="1" fill="#54FCFC"/>
<rect x="623" y="609" width="1" height="1" fill="#54FCFC"/>
<rect x="626" y="611" width="1" height="1" fill="#FF3C3C"/>
<rect x="630" y="610" width="1" height="1" fill="#54FCFC"/>
<rect x="634" y="611" width="1" height="1" fill="#FF3C3C"/>
<rect x="637" y="610" width="1" height="1" fill="#54FCFC"/>
<rect x="641" y="611" width="1" height="1" fill="#54FCFC"/>
<rect x="645" y="612" width="1" height="1" fill="#54FCFC"/>
<rect x="648" y="612" width="1" height="1" fill="#FF3C3C"/>
<rect x="652" y="612" width="1" height="1" fill="#FF3C3C"/>
<rect x="655" y="612" width="1" height="1" fill="#FF3C3C"/>
<rect x="659" y="611" width="1" height="1" fill="#FF3C3C"/>
<rect x="663" y="613" width="1" height="1" fill="#FF3C3C"/>
<rect x="666" y="614" width="1" height="1" fill="#54FCFC"/>
<rect x="670" y="614" width="1" height="1" fill="#54FCFC"/>
<rect x="674" y="615" width="1" height="1" fill="#54FCFC"/>
<rect x="677" y="615" width="1" height="1" fill="#FF3C3C"/>
<rect x="681" y="615" width="1" height="1" fill="#54FCFC"/>
<rect x="684" y="615" width="1" height="1" fill="#FF3C3C"/>
<rect x="688" y="615" width="1" height="1" fill="#FF3C3C"/>
<rect x="692" y="615" width="1" height="1" fill="#54FCFC"/>
<rect x="695" y="615" width="1" height="1" fill="#54FCFC"/>
<rect x="699" y="615" width="1" height="1" fill="#FF3C3C"/>
<rect x="703" y="615" width="1" height="1" fill="#FF3C3C"/>
<rect x="706" y="614" width="1" height="1" fill="#FF3C3C"/>
<rect x="710" y="614" width="1" height="1" fill="#54FCFC"/>
<rect x="714" y="614" width="1" height="1" fill="#54FCFC"/>
<rect x="717" y="615" width="1" height="1" fill="#54FCFC"/>
<rect x="721" y="615" width="1" height="1" fill="#FF3C3C"/>
<rect x="724" y="615" width="1" height="1" fill="#54FCFC"/>
<rect x="728" y="614" width="1" height="1" fill="#FF3C3C"/>
<rect x="732" y="614" width="1" height="1" fill="#54FCFC"/>
<rect x="735" y="614" width="1" height="1" fill="#FF3C3C"/>
<rect x="739" y="614" width="1" height="1" fill="#54FCFC"/>
<rect x="743" y="614" width="1" height="1" fill="#FF3C3C"/>
<rect x="746" y="613" width="1" height="1" fill="#FF3C3C"/>
<rect x="750" y="613" width="1" height="1" fill="#54FCFC"/>
<rect x="754" y="614" width="1" height="1" fill="#54FCFC"/>
<rect x="757" y="614" width="1" height="1" fill="#FF3C3C"/>
<rect x="761" y="613" width="1" height="1" fill="#54FCFC"/>
<rect x="764" y="614" width="1" height="1" fill="#54FCFC"/>
<rect x="768" y="614" width="1" height="1" fill="#FF3C3C"/>
<rect x="772" y="614" width="1" height="1" fill="#54FCFC"/>
<rect x="775" y="615" width="1" height="1" fill="#54FCFC"/>
<rect x="779" y="615" width="1" height="1" fill="#FF3C3C"/>
<rect x="783" y="615" width="1" height="1" fill="#54FCFC"/>
<rect x="786" y="615" width="1" height="1" fill="#FF3C3C"/>
<rect x="790" y="614" width="1" height="1" fill="#FF3C3C"/>
<rect x="794" y="615" width="1" height="1" fill="#FF3C3C"/>
<rect x="797" y="614" width="1" height="1" fill="#FF3C3C"/>
<rect x="801" y="614" width="1" height="1" fill="#FF3C3C"/>
<rect x="804" y="614" width="1" height="1" fill="#54FCFC"/>
<rect x="808" y="614" width="1" height="1" fill="#54FCFC"/>
<rect x="812" y="614" width="1" height="1" fill="#54FCFC"/>
<rect x="815" y="614" width="1" height="1" fill="#54FCFC"/>
<rect x="819" y="614" width="1" height="1" fill="#54FCFC"/>
<rect x="823" y="614" width="1" height="1" fill="#54FCFC"/>
<rect x="826" y="615" width="1" height="1" fill="#54FCFC"/>
<rect x="830" y="615" width="1" height="1" fill="#FF3C3C"/>
<rect x="833" y="615" width="1" height="1" fill="#54FCFC"/>
<rect x="837" y="614" width="1" height="1" fill="#FF3C3C"/>
<rect x="841" y="613" width="1" height="1" fill="#FF3C3C"/>
<rect x="844" y="613" width="1" height="1" fill="#54FCFC"/>
<rect x="848" y="613" width="1" height="1" fill="#FF3C3C"/>
<rect x="852" y="612" width="1" height="1" fill="#FF3C3C"/>
<rect x="855" y="610" width="1" height="1" fill="#FF3C3C"/>
<rect x="859" y="609" width="1" height="1" fill="#54FCFC"/>
<rect x="863" y="609" width="1" height="1" fill="#54FCFC"/>
<rect x="866" y="610" width="1" height="1" fill="#54FCFC"/>
<rect x="870" y="612" width="1" height="1" fill="#54FCFC"/>
<rect x="873" y="612" width="1" height="1" fill="#FF3C3C"/>
<rect x="877" y="612" width="1" height="1" fill="#54FCFC"/>
<rect x="881" y="612" width="1" height="1" fill="#FF3C3C"/>
<rect x="884" y="612" width="1" height="1" fill="#54FCFC"/>
<rect x="888" y="612" width="1" height="1" fill="#FF3C3C"/>
<rect x="892" y="613" width="1" height="1" fill="#54FCFC"/>
<rect x="895" y="613" width="1" height="1" fill="#FF3C3C"/>
<rect x="899" y="613" width="1" height="1" fill="#54FCFC"/>
<rect x="903" y="614" width="1" height="1" fill="#54FCFC"/>
<rect x="906" y="614" width="1" height="1" fill="#54FCFC"/>
<rect x="910" y="615" width="1" height="1" fill="#FF3C3C"/>
<rect x="913" y="615" width="1" height="1" fill="#FF3C3C"/>
<rect x="917" y="614" width="1" height="1" fill="#FF3C3C"/>
<rect x="921" y="614" width="1" height="1" fill="#FF3C3C"/>
<rect x="924" y="614" width="1" height="1" fill="#54FCFC"/>
<rect x="928" y="614" width="1" height="1" fill="#FFFFFF"/>
<rect x="932" y="614" width="1" height="1" fill="#FFFFFF"/>
<rect x="935" y="614" width="1" height="1" fill="#54FCFC"/>
<rect x="939" y="614" width="1" height="1" fill="#54FCFC"/>
<rect x="942" y="615" width="1" height="1" fill="#54FCFC"/>
<rect x="946" y="615" width="1" height="1" fill="#54FCFC"/>
<rect x="950" y="615" width="1" height="1" fill="#54FCFC"/>
<rect x="953" y="616" width="1" height="1" fill="#54FCFC"/>
<rect x="957" y="616" width="1" height="1" fill="#FF3C3C"/>
<rect x="961" y="617" width="1" height="1" fill="#54FCFC"/>
<rect x="964" y="618" width="1" height="1" fill="#54FCFC"/>
<rect x="968" y="618" width="1" height="1" fill="#FF3C3C"/>
<rect x="972" y="618" width="1" height="1" fill="#54FCFC"/>
<rect x="975" y="618" width="1" height="1" fill="#FF3C3C"/>
<rect x="979" y="618" width="1" height="1" fill="#FF3C3C"/>
<rect x="982" y="617" width="1" height="1" fill="#54FCFC"/>
<rect x="986" y="617" width="1" height="1" fill="#54FCFC"/>
<rect x="990" y="617" width="1" height="1" fill="#FF3C3C"/>
<rect x="993" y="617" width="1" height="1" fill="#54FCFC"/>
<rect x="997" y="618" width="1" height="1" fill="#FF3C3C"/>
<rect x="1001" y="617" width="1" height="1" fill="#FF3C3C"/>
<rect x="1004" y="617" width="1" height="1" fill="#54FCFC"/>
<rect x="1008" y="617" width="1" height="1" fill="#54FCFC"/>
<rect x="1012" y="618" width="1" height="1" fill="#54FCFC"/>
<rect x="1015" y="620" width="1" height="1" fill="#54FCFC"/>
<rect x="1019" y="620" width="1" height="1" fill="#FF3C3C"/>
<rect x="1022" y="619" width="1" height="1" fill="#FF3C3C"/>
<rect x="1026" y="619" width="1" height="1" fill="#54FCFC"/>
<rect x="1030" y="620" width="1" height="1" fill="#FF3C3C"/>
<rect x="1033" y="618" width="1" height="1" fill="#FF3C3C"/>
<rect x="1037" y="618" width="1" height="1" fill="#54FCFC"/>
<rect x="1041" y="618" width="1" height="1" fill="#FF3C3C"/>
<rect x="1044" y="618" width="1" height="1" fill="#FF3C3C"/>
<rect x="1048" y="618" width="1" height="1" fill="#54FCFC"/>
<rect x="1052" y="619" width="1" height="1" fill="#54FCFC"/>
<rect x="1055" y="618" width="1" height="1" fill="#FF3C3C"/>
<rect x="1059" y="618" width="1" height="1" fill="#54FCFC"/>
<line x1="181" x2="194" y1="612.5" y2="612.5" stroke="#FF00FF"/>
<line x1="551" x2="564" y1="609.5" y2="609.5" stroke="#FF00FF"/>
<line x1="831" x2="844" y1="614.5" y2="614.5" stroke="#FF00FF"/>
<rect x="171" y="612" width="3" height="5" fill="#fff"/>
<rect x="0" y="19" width="1123" height="1" fill="#C80000"/>
<rect x="0" y="0" width="1" height="20" fill="#C80000"/>
<rect x="23" y="0" width="1" height="20" fill="#C80000"/>
<rect x="808" y="0" width="1" height="20" fill="#C80000"/>
<rect x="841" y="0" width="1" height="20" fill="#C80000"/>
<rect x="876" y="0" width="1" height="20" fill="#C80000"/>
<rect x="911" y="0" width="1" height="20" fill="#C80000"/>
<rect x="946" y="0" width="1" height="20" fill="#C80000"/>
<rect x="981" y="0" width="1" height="20" fill="#C80000"/>
<rect x="1016" y="0" width="1" height="20" fill="#C80000"/>
<rect x="1051" y="0" width="1" height="20" fill="#C80000"/>
<rect x="1086" y="0" width="1" height="20" fill="#C80000"/>
<rect x="1122" y="0" width="1" height="20" fill="#C80000"/>
<rect x="1072" y="20" width="1" height="365" fill="#C80000"/>
<rect x="1072" y="385" width="2" height="261" fill="#C80000"/>
<rect x="1123" y="20" width="1" height="365" fill="#C80000"/>
<rect x="1122" y="385" width="2" height="265" fill="#C80000"/>
<rect x="0" y="385" width="1072" height="1" fill="#C80000"/>
<rect x="1072" y="385" width="51" height="2" fill="#C80000"/>
<rect x="0" y="630" width="984" height="1" fill="#C80000"/>
<rect x="0" y="646" width="984" height="1" fill="#C80000"/>
<rect x="1123" y="25" width="7" height="1" fill="#C80000"/>
<rect x="1123" y="45" width="7" height="1" fill="#C80000"/>
<rect x="1123" y="243" width="7" height="1" fill="#C80000"/>
<rect x="1123" y="347" width="7" height="1" fill="#C80000"/>
<rect x="1124" y="397" width="6" height="1" fill="#C80000"/>
<rect x="1124" y="418" width="6" height="1" fill="#C80000"/>
<rect x="1124" y="437" width="6" height="1" fill="#C80000"/>
<rect x="1073" y="62" width="5" height="1" fill="#C80000"/>
<rect x="1073" y="85" width="3" height="1" fill="#C80000"/>
<rect x="1073" y="108" width="5" height="1" fill="#C80000"/>
<rect x="1073" y="131" width="3" height="1" fill="#C80000"/>
<rect x="1073" y="154" width="5" height="1" fill="#C80000"/>
<rect x="1073" y="177" width="3" height="1" fill="#C80000"/>
<rect x="1073" y="200" width="5" height="1" fill="#C80000"/>
<rect x="1073" y="223" width="3" height="1" fill="#C80000"/>
<rect x="1073" y="246" width="5" height="1" fill="#C80000"/>
<rect x="1073" y="269" width="3" height="1" fill="#C80000"/>
<rect x="1073" y="292" width="5" height="1" fill="#C80000"/>
<rect x="1073" y="315" width="3" height="1" fill="#C80000"/>
<rect x="1073" y="338" width="5" height="1" fill="#C80000"/>
<rect x="1073" y="361" width="3" height="1" fill="#C80000"/>
<rect x="1074" y="420" width="5" height="1" fill="#C80000"/>
<rect x="1074" y="435" width="3" height="1" fill="#C80000"/>
<rect x="1074" y="450" width="5" height="1" fill="#C80000"/>
<rect x="1074" y="465" width="3" height="1" fill="#C80000"/>
<rect x="1074" y="481" width="5" height="1" fill="#C80000"/>
<rect x="1074" y="496" width="3" height="1" fill="#C80000"/>
<rect x="1074" y="511" width="5" height="1" fill="#C80000"/>
<rect x="1074" y="526" width="3" height="1" fill="#C80000"/>
<rect x="1074" y="542" width="5" height="1" fill="#C80000"/>
<rect x="1074" y="557" width="3" height="1" fill="#C80000"/>
<rect x="1074" y="572" width="5" height="1" fill="#C80000"/>
<rect x="1074" y="587" width="3" height="1" fill="#C80000"/>
<rect x="1074" y="405" width="3" height="1" fill="#C80000"/>
<rect x="1073" y="284" width="50" height="15" fill="#000080"/>
<rect x="1073" y="283" width="50" height="1" fill="#C80000"/>
<rect x="1073" y="299" width="50" height="1" fill="#C80000"/>
<rect x="84" y="630" width="1" height="16" fill="#C80000"/>
<rect x="160" y="630" width="1" height="16" fill="#C80000"/>
<rect x="237" y="630" width="1" height="16" fill="#C80000"/>
<rect x="306" y="630" width="1" height="16" fill="#C80000"/>
<rect x="378" y="630" width="1" height="16" fill="#C80000"/>
<rect x="462" y="630" width="1" height="16" fill="#C80000"/>
<rect x="538" y="630" width="1" height="16" fill="#C80000"/>
<rect x="618" y="630" width="1" height="16" fill="#C80000"/>
<rect x="680" y="630" width="1" height="16" fill="#C80000"/>
<rect x="753" y="630" width="1" height="16" fill="#C80000"/>
<rect x="836" y="630" width="1" height="16" fill="#C80000"/>
<rect x="909" y="630" width="1" height="16" fill="#C80000"/>
<rect x="960" y="630" width="1" height="16" fill="#C80000"/>
<rect x="104" y="630" width="1" height="3" fill="#C80000"/>
<rect x="122" y="630" width="1" height="3" fill="#C80000"/>
<rect x="141" y="630" width="1" height="3" fill="#C80000"/>
<rect x="179" y="630" width="1" height="3" fill="#C80000"/>
<rect x="200" y="630" width="1" height="3" fill="#C80000"/>
<rect x="219" y="630" width="1" height="3" fill="#C80000"/>
<rect x="254" y="630" width="1" height="3" fill="#C80000"/>
<rect x="272" y="630" width="1" height="3" fill="#C80000"/>
<rect x="289" y="630" width="1" height="3" fill="#C80000"/>
<rect x="324" y="630" width="1" height="3" fill="#C80000"/>
<rect x="342" y="630" width="1" height="3" fill="#C80000"/>
<rect x="360" y="630" width="1" height="3" fill="#C80000"/>
<rect x="399" y="630" width="1" height="3" fill="#C80000"/>
<rect x="420" y="630" width="1" height="3" fill="#C80000"/>
<rect x="441" y="630" width="1" height="3" fill="#C80000"/>
<rect x="481" y="630" width="1" height="3" fill="#C80000"/>
<rect x="500" y="630" width="1" height="3" fill="#C80000"/>
<rect x="519" y="630" width="1" height="3" fill="#C80000"/>
<rect x="558" y="630" width="1" height="3" fill="#C80000"/>
<rect x="578" y="630" width="1" height="3" fill="#C80000"/>
<rect x="598" y="630" width="1" height="3" fill="#C80000"/>
<rect x="634" y="630" width="1" height="3" fill="#C80000"/>
<rect x="649" y="630" width="1" height="3" fill="#C80000"/>
<rect x="665" y="630" width="1" height="3" fill="#C80000"/>
<rect x="698" y="630" width="1" height="3" fill="#C80000"/>
<rect x="717" y="630" width="1" height="3" fill="#C80000"/>
<rect x="735" y="630" width="1" height="3" fill="#C80000"/>
<rect x="774" y="630" width="1" height="3" fill="#C80000"/>
<rect x="795" y="630" width="1" height="3" fill="#C80000"/>
<rect x="815" y="630" width="1" height="3" fill="#C80000"/>
<rect x="854" y="630" width="1" height="3" fill="#C80000"/>
<rect x="873" y="630" width="1" height="3" fill="#C80000"/>
<rect x="892" y="630" width="1" height="3" fill="#C80000"/>
<rect x="923" y="630" width="1" height="3" fill="#C80000"/>
<rect x="935" y="630" width="1" height="3" fill="#C80000"/>
<rect x="948" y="630" width="1" height="3" fill="#C80000"/>
<rect x="980" y="630" width="1" height="3" fill="#C80000"/>
<rect x="42" y="646" width="1" height="4" fill="#C80000"/>
<rect x="73" y="646" width="1" height="4" fill="#C80000"/>
<rect x="115" y="646" width="1" height="4" fill="#C80000"/>
<rect x="144" y="646" width="1" height="4" fill="#C80000"/>
<rect x="177" y="646" width="1" height="4" fill="#C80000"/>
<rect x="208" y="646" width="1" height="4" fill="#C80000"/>
<rect x="241" y="646" width="1" height="4" fill="#C80000"/>
<rect x="282" y="646" width="1" height="4" fill="#C80000"/>
<rect x="308" y="646" width="1" height="4" fill="#C80000"/>
<rect x="332" y="646" width="1" height="4" fill="#C80000"/>
<rect x="364" y="646" width="1" height="4" fill="#C80000"/>
<rect x="390" y="646" width="1" height="4" fill="#C80000"/>
<rect x="422" y="646" width="1" height="4" fill="#C80000"/>
<rect x="480" y="646" width="1" height="4" fill="#C80000"/>
<rect x="508" y="646" width="1" height="4" fill="#C80000"/>
<rect x="536" y="646" width="1" height="4" fill="#C80000"/>
<rect x="568" y="646" width="1" height="4" fill="#C80000"/>
<rect x="599" y="646" width="1" height="4" fill="#C80000"/>
<rect x="628" y="646" width="1" height="4" fill="#C80000"/>
<rect x="663" y="646" width="1" height="4" fill="#C80000"/>
<rect x="696" y="646" width="1" height="4" fill="#C80000"/>
<rect x="735" y="646" width="1" height="4" fill="#C80000"/>
<rect x="766" y="646" width="1" height="4" fill="#C80000"/>
<rect x="807" y="646" width="1" height="4" fill="#C80000"/>
<rect x="839" y="646" width="1" height="4" fill="#C80000"/>
<rect x="871" y="646" width="1" height="4" fill="#C80000"/>
<rect x="905" y="646" width="1" height="4" fill="#C80000"/>
<rect x="940" y="646" width="1" height="4" fill="#C80000"/>
<rect x="970" y="646" width="1" height="4" fill="#C80000"/>
<rect x="6" y="648" width="1" height="2" fill="#ddd"/>
<rect x="9" y="648" width="2" height="2" fill="#ddd"/>
<rect x="13" y="648" width="1" height="2" fill="#ddd"/>
<rect x="17" y="648" width="2" height="2" fill="#ddd"/>
<rect x="21" y="648" width="1" height="2" fill="#ddd"/>
<rect x="51" y="648" width="1" height="2" fill="#ddd"/>
<rect x="829" y="648" width="1" height="2" fill="#ddd"/>
<rect x="845" y="648" width="3" height="2" fill="#54FCFC"/>
<rect x="850" y="648" width="2" height="2" fill="#54FCFC"/>
<rect x="856" y="648" width="8" height="2" fill="#54FCFC"/>
<rect x="5.5" y="3.5" width="11" height="11" rx="2" fill="none" stroke="#808080" shape-rendering="auto"/><rect x="12" y="5" width="3" height="8" fill="#808080"/>
<path d="M1044.5 23.5 L1050 29 L1044.5 34.5 L1039 29 Z" fill="none" stroke="#909090" shape-rendering="auto"/>
<rect x="1057.5" y="23.5" width="11" height="11" rx="2" fill="none" stroke="#909090" shape-rendering="auto"/><rect x="1064" y="25" width="3" height="8" fill="#909090"/>
<g shape-rendering="auto"><circle cx="95" cy="29" r="6" fill="#808080"/><path d="M91.5 27.5 L95 31 L98.5 27.5" fill="none" stroke="#000" stroke-width="1.3"/></g>
<g shape-rendering="auto"><circle cx="9" cy="394" r="6" fill="#808080"/><path d="M5.5 392.5 L9 396 L12.5 392.5" fill="none" stroke="#000" stroke-width="1.3"/></g>
<path d="M188 224 L193.5 230 L189 230 L189 236 L187 236 L187 230 L182.5 230 Z" fill="#FF0000" shape-rendering="auto"/>
<path d="M558 194 L563.5 200 L559 200 L559 206 L557 206 L557 200 L552.5 200 Z" fill="#FF0000" shape-rendering="auto"/>
<path d="M838 253 L843.5 259 L839 259 L839 265 L837 265 L837 259 L832.5 259 Z" fill="#FF0000" shape-rendering="auto"/>
<path d="M227 122 L229 122 L229 128 L233.5 128 L228 134 L222.5 128 L227 128 Z" fill="#00D000" shape-rendering="auto"/>
<path d="M586 64 L588 64 L588 70 L592.5 70 L587 76 L581.5 70 L586 70 Z" fill="#00D000" shape-rendering="auto"/>
<path d="M870 133 L872 133 L872 139 L876.5 139 L871 145 L865.5 139 L870 139 Z" fill="#00D000" shape-rendering="auto"/>
<path d="M227 611 L229 611 L229 617 L233.5 617 L228 623 L222.5 617 L227 617 Z" fill="#00D000" shape-rendering="auto"/>
<path d="M586 607.5 L588 607.5 L588 613.5 L592.5 613.5 L587 619.5 L581.5 613.5 L586 613.5 Z" fill="#00D000" shape-rendering="auto"/>
<path d="M870 610.5 L872 610.5 L872 616.5 L876.5 616.5 L871 622.5 L865.5 616.5 L870 616.5 Z" fill="#00D000" shape-rendering="auto"/>
<path d="M188 618 L193 624 L183 624 Z" fill="#FF0000" shape-rendering="auto"/>
<text x="184" y="630" font-size="11" font-weight="bold" fill="#FF0000" shape-rendering="auto">B</text>
<path d="M558 616 L563 622 L553 622 Z" fill="#FF0000" shape-rendering="auto"/>
<text x="554" y="630" font-size="11" font-weight="bold" fill="#FF0000" shape-rendering="auto">B</text>
<path d="M838 619 L843 625 L833 625 Z" fill="#FF0000" shape-rendering="auto"/>
<text x="834" y="630" font-size="11" font-weight="bold" fill="#FF0000" shape-rendering="auto">B</text>
<text x="183" y="273" font-size="16" font-weight="bold" textLength="9.5" lengthAdjust="spacingAndGlyphs" fill="#FF0000">B</text>
<text x="553" y="246" font-size="16" font-weight="bold" textLength="9.5" lengthAdjust="spacingAndGlyphs" fill="#FF0000">B</text>
<text x="833" y="302" font-size="16" font-weight="bold" textLength="9.5" lengthAdjust="spacingAndGlyphs" fill="#FF0000">B</text>
<g shape-rendering="auto"><text x="73.5" y="59" font-size="12.1" fill="#C8C8C8">19.28</text><path d="M70.8 53.6 L68.5 53.2 L66.5 52 L63.5 51.3 L60.5 50.6 M59.3 52 L59.3 49.2 L62.6 48.6 M60.5 52.4 L61.6 53.5" fill="none" stroke="#C8C8C8"/></g>
<g shape-rendering="auto"><text x="965" y="309.5" font-size="12" fill="#C8C8C8">13.77</text><path d="M994 304.5 L1013 304.5 M1009 301.5 L1013 304.5 L1009 307.5" fill="none" stroke="#C8C8C8"/></g>
<rect x="184" y="539" width="7" height="27" fill="#FF0000"/>
<rect x="183" y="566" width="9" height="4" fill="#FFFF00"/>
<rect x="183" y="487" width="9" height="10" fill="#FFFF00"/>
<rect x="186" y="514" width="3" height="1" fill="#FF0000"/>
<g shape-rendering="auto"><rect x="180" y="405.5" width="16" height="16" fill="#000"/><path d="M184 406.0 L191.5 406.0 L188.8 409.3 L186.8 409.3 Z" fill="#F8E020"/><rect x="186" y="409.0" width="3.6" height="1.6" fill="#FFF4C8"/><path d="M186 410.5 C180 412.5 179.2 421.1 184 421.5 L191.5 421.5 C196.4 421.1 195.6 412.5 189.6 410.5 Z" fill="#FFFF8C" stroke="#A04838" stroke-width="0.9"/><text x="185" y="419.7" font-size="9.5" font-weight="bold" fill="#8A2A30">$</text></g>
<g shape-rendering="auto"><rect x="180" y="548" width="16" height="16" fill="#000"/><path d="M184 548.5 L191.5 548.5 L188.8 551.8 L186.8 551.8 Z" fill="#F8E020"/><rect x="186" y="551.5" width="3.6" height="1.6" fill="#FFF4C8"/><path d="M186 553 C180 555 179.2 563.6 184 564 L191.5 564 C196.4 563.6 195.6 555 189.6 553 Z" fill="#FFFF8C" stroke="#A04838" stroke-width="0.9"/><text x="185" y="562.2" font-size="9.5" font-weight="bold" fill="#8A2A30">$</text></g>
<g shape-rendering="auto" fill="#E8B400"><path d="M188 592 C186 586 180 586 180 588 C180 591 184 593 188 593 Z"/><path d="M188 592 C190 586 196 586 196 588 C196 591 192 593 188 593 Z"/><path d="M188 593 C183 593 182 598 185 598 C186.5 598 187.5 595 188 593 Z"/><path d="M188 593 C193 593 194 598 191 598 C189.5 598 188.5 595 188 593 Z"/><path d="M188 591 L190.5 585" stroke="#A07800" stroke-width=".7" fill="none"/></g>
<rect x="554" y="539" width="7" height="27" fill="#FF0000"/>
<rect x="553" y="566" width="9" height="4" fill="#FFFF00"/>
<rect x="553" y="487" width="9" height="10" fill="#FFFF00"/>
<rect x="556" y="514" width="3" height="1" fill="#FF0000"/>
<g shape-rendering="auto"><rect x="550" y="405.5" width="16" height="16" fill="#000"/><path d="M554 406.0 L561.5 406.0 L558.8 409.3 L556.8 409.3 Z" fill="#F8E020"/><rect x="556" y="409.0" width="3.6" height="1.6" fill="#FFF4C8"/><path d="M556 410.5 C550 412.5 549.2 421.1 554 421.5 L561.5 421.5 C566.4 421.1 565.6 412.5 559.6 410.5 Z" fill="#FFFF8C" stroke="#A04838" stroke-width="0.9"/><text x="555" y="419.7" font-size="9.5" font-weight="bold" fill="#8A2A30">$</text></g>
<g shape-rendering="auto"><rect x="550" y="548" width="16" height="16" fill="#000"/><path d="M554 548.5 L561.5 548.5 L558.8 551.8 L556.8 551.8 Z" fill="#F8E020"/><rect x="556" y="551.5" width="3.6" height="1.6" fill="#FFF4C8"/><path d="M556 553 C550 555 549.2 563.6 554 564 L561.5 564 C566.4 563.6 565.6 555 559.6 553 Z" fill="#FFFF8C" stroke="#A04838" stroke-width="0.9"/><text x="555" y="562.2" font-size="9.5" font-weight="bold" fill="#8A2A30">$</text></g>
<g shape-rendering="auto" fill="#E8B400"><path d="M558 592 C556 586 550 586 550 588 C550 591 554 593 558 593 Z"/><path d="M558 592 C560 586 566 586 566 588 C566 591 562 593 558 593 Z"/><path d="M558 593 C553 593 552 598 555 598 C556.5 598 557.5 595 558 593 Z"/><path d="M558 593 C563 593 564 598 561 598 C559.5 598 558.5 595 558 593 Z"/><path d="M558 591 L560.5 585" stroke="#A07800" stroke-width=".7" fill="none"/></g>
<rect x="834" y="539" width="7" height="27" fill="#FF0000"/>
<rect x="833" y="566" width="9" height="4" fill="#FFFF00"/>
<rect x="833" y="487" width="9" height="10" fill="#FFFF00"/>
<rect x="836" y="514" width="3" height="1" fill="#FF0000"/>
<g shape-rendering="auto"><rect x="830" y="405.5" width="16" height="16" fill="#000"/><path d="M834 406.0 L841.5 406.0 L838.8 409.3 L836.8 409.3 Z" fill="#F8E020"/><rect x="836" y="409.0" width="3.6" height="1.6" fill="#FFF4C8"/><path d="M836 410.5 C830 412.5 829.2 421.1 834 421.5 L841.5 421.5 C846.4 421.1 845.6 412.5 839.6 410.5 Z" fill="#FFFF8C" stroke="#A04838" stroke-width="0.9"/><text x="835" y="419.7" font-size="9.5" font-weight="bold" fill="#8A2A30">$</text></g>
<g shape-rendering="auto"><rect x="830" y="548" width="16" height="16" fill="#000"/><path d="M834 548.5 L841.5 548.5 L838.8 551.8 L836.8 551.8 Z" fill="#F8E020"/><rect x="836" y="551.5" width="3.6" height="1.6" fill="#FFF4C8"/><path d="M836 553 C830 555 829.2 563.6 834 564 L841.5 564 C846.4 563.6 845.6 555 839.6 553 Z" fill="#FFFF8C" stroke="#A04838" stroke-width="0.9"/><text x="835" y="562.2" font-size="9.5" font-weight="bold" fill="#8A2A30">$</text></g>
<g shape-rendering="auto" fill="#E8B400"><path d="M838 592 C836 586 830 586 830 588 C830 591 834 593 838 593 Z"/><path d="M838 592 C840 586 846 586 846 588 C846 591 842 593 838 593 Z"/><path d="M838 593 C833 593 832 598 835 598 C836.5 598 837.5 595 838 593 Z"/><path d="M838 593 C843 593 844 598 841 598 C839.5 598 838.5 595 838 593 Z"/><path d="M838 591 L840.5 585" stroke="#A07800" stroke-width=".7" fill="none"/></g>
<rect x="132" y="372" width="4" height="13" fill="#C05010"/><rect x="136" y="372" width="13" height="13" fill="#108888"/>
<text x="136" y="383" font-size="12" fill="#fff" shape-rendering="auto">解</text>
<g shape-rendering="auto"><path d="M266 371.5 L268.5 374.5 L263.5 374.5 Z" fill="#FF0000"/><text x="262.5" y="384.5" font-size="11.5" font-weight="bold" fill="#FF0000">$</text></g>
<rect x="514" y="371" width="13" height="13" fill="#A85008"/><rect x="515.5" y="373.5" width="9" height="9" fill="none" stroke="#fff"/><rect x="517.5" y="375.5" width="5" height="5" fill="none" stroke="#fff"/>
<rect x="1019" y="371" width="13" height="13" fill="#104888"/><text x="1019.5" y="382" font-size="12" fill="#fff" shape-rendering="auto">财</text>
<rect x="1127" y="28" width="1" height="2" fill="#d0d0d0"/>
<rect x="1128" y="31" width="1" height="1" fill="#d0d0d0"/>
<rect x="1128" y="34" width="1" height="2" fill="#d0d0d0"/>
<rect x="1128" y="37" width="1" height="1" fill="#d0d0d0"/>
<rect x="1126" y="40" width="1" height="2" fill="#d0d0d0"/>
<rect x="1127" y="43" width="1" height="1" fill="#d0d0d0"/>
<rect x="1126" y="49" width="3" height="3" fill="#d8d8d8"/>
<rect x="1128" y="51" width="1" height="1" fill="#d8d8d8"/>
<rect x="1128" y="53" width="2" height="3" fill="#d8d8d8"/>
<rect x="1126" y="55" width="1" height="1" fill="#d8d8d8"/>
<rect x="1127" y="58" width="1" height="1" fill="#d8d8d8"/>
<rect x="1128" y="61" width="2" height="1" fill="#d8d8d8"/>
<rect x="1128" y="63" width="2" height="1" fill="#d8d8d8"/>
<rect x="1126" y="66" width="3" height="1" fill="#d8d8d8"/>
<rect x="1128" y="68" width="1" height="3" fill="#d8d8d8"/>
<rect x="1127" y="72" width="2" height="3" fill="#d8d8d8"/>
<rect x="1127" y="75" width="1" height="1" fill="#d8d8d8"/>
<rect x="1126" y="78" width="3" height="2" fill="#d8d8d8"/>
<rect x="1127" y="82" width="3" height="3" fill="#d8d8d8"/>
<rect x="1128" y="85" width="1" height="1" fill="#d8d8d8"/>
<rect x="1126" y="89" width="2" height="1" fill="#d8d8d8"/>
<rect x="1127" y="93" width="1" height="1" fill="#d8d8d8"/>
<rect x="1127" y="96" width="3" height="2" fill="#d8d8d8"/>
<rect x="1128" y="100" width="2" height="1" fill="#d8d8d8"/>
<rect x="1127" y="102" width="2" height="1" fill="#d8d8d8"/>
<rect x="1128" y="104" width="2" height="2" fill="#d8d8d8"/>
<rect x="1127" y="108" width="3" height="3" fill="#d8d8d8"/>
<rect x="1126" y="111" width="2" height="2" fill="#d8d8d8"/>
<rect x="1128" y="114" width="1" height="3" fill="#d8d8d8"/>
<rect x="1126" y="116" width="2" height="1" fill="#d8d8d8"/>
<rect x="1127" y="119" width="2" height="3" fill="#d8d8d8"/>
<rect x="1126" y="121" width="2" height="3" fill="#d8d8d8"/>
<rect x="1126" y="124" width="2" height="2" fill="#d8d8d8"/>
<rect x="1127" y="128" width="3" height="3" fill="#d8d8d8"/>
<rect x="1126" y="131" width="1" height="1" fill="#d8d8d8"/>
<rect x="1126" y="134" width="3" height="1" fill="#d8d8d8"/>
<rect x="1127" y="136" width="3" height="1" fill="#d8d8d8"/>
<rect x="1127" y="139" width="1" height="1" fill="#d8d8d8"/>
<rect x="1128" y="143" width="2" height="2" fill="#d8d8d8"/>
<rect x="1128" y="146" width="2" height="1" fill="#d8d8d8"/>
<rect x="1128" y="150" width="2" height="3" fill="#d8d8d8"/>
<rect x="1127" y="154" width="2" height="1" fill="#d8d8d8"/>
<rect x="1128" y="158" width="2" height="1" fill="#d8d8d8"/>
<rect x="1126" y="161" width="1" height="3" fill="#d8d8d8"/>
<rect x="1126" y="164" width="2" height="1" fill="#d8d8d8"/>
<rect x="1126" y="166" width="3" height="1" fill="#d8d8d8"/>
<rect x="1127" y="168" width="3" height="1" fill="#d8d8d8"/>
<rect x="1126" y="170" width="3" height="3" fill="#d8d8d8"/>
<rect x="1128" y="173" width="2" height="2" fill="#d8d8d8"/>
<rect x="1127" y="176" width="1" height="1" fill="#d8d8d8"/>
<rect x="1127" y="180" width="2" height="3" fill="#d8d8d8"/>
<rect x="1126" y="183" width="1" height="1" fill="#d8d8d8"/>
<rect x="1128" y="186" width="2" height="3" fill="#d8d8d8"/>
<rect x="1128" y="189" width="1" height="1" fill="#d8d8d8"/>
<rect x="1126" y="192" width="3" height="1" fill="#d8d8d8"/>
<rect x="1128" y="195" width="1" height="2" fill="#d8d8d8"/>
<rect x="1126" y="198" width="2" height="1" fill="#d8d8d8"/>
<rect x="1128" y="201" width="1" height="1" fill="#d8d8d8"/>
<rect x="1127" y="204" width="3" height="1" fill="#d8d8d8"/>
<rect x="1128" y="207" width="2" height="2" fill="#d8d8d8"/>
<rect x="1126" y="209" width="2" height="3" fill="#d8d8d8"/>
<rect x="1126" y="212" width="3" height="2" fill="#d8d8d8"/>
<rect x="1128" y="216" width="2" height="2" fill="#d8d8d8"/>
<rect x="1126" y="218" width="1" height="1" fill="#d8d8d8"/>
<rect x="1126" y="222" width="2" height="1" fill="#d8d8d8"/>
<rect x="1128" y="226" width="2" height="1" fill="#d8d8d8"/>
<rect x="1128" y="230" width="2" height="1" fill="#d8d8d8"/>
<rect x="1127" y="232" width="3" height="1" fill="#d8d8d8"/>
<rect x="1126" y="236" width="2" height="2" fill="#d8d8d8"/>
<rect x="1128" y="238" width="2" height="3" fill="#d8d8d8"/>
<rect x="1126" y="247" width="1" height="1" fill="#d8d8d8"/>
<rect x="1128" y="250" width="2" height="1" fill="#d8d8d8"/>
<rect x="1128" y="254" width="2" height="1" fill="#d8d8d8"/>
<rect x="1126" y="257" width="1" height="1" fill="#d8d8d8"/>
<rect x="1127" y="260" width="1" height="1" fill="#d8d8d8"/>
<rect x="1127" y="262" width="1" height="2" fill="#d8d8d8"/>
<rect x="1128" y="265" width="2" height="2" fill="#d8d8d8"/>
<rect x="1126" y="269" width="1" height="2" fill="#d8d8d8"/>
<rect x="1128" y="273" width="2" height="3" fill="#d8d8d8"/>
<rect x="1128" y="276" width="1" height="1" fill="#d8d8d8"/>
<rect x="1126" y="280" width="3" height="1" fill="#d8d8d8"/>
<rect x="1126" y="283" width="1" height="3" fill="#d8d8d8"/>
<rect x="1128" y="285" width="1" height="2" fill="#d8d8d8"/>
<rect x="1126" y="289" width="3" height="1" fill="#d8d8d8"/>
<rect x="1126" y="292" width="2" height="1" fill="#d8d8d8"/>
<rect x="1128" y="294" width="2" height="1" fill="#d8d8d8"/>
<rect x="1127" y="296" width="2" height="1" fill="#d8d8d8"/>
<rect x="1127" y="299" width="3" height="3" fill="#d8d8d8"/>
<rect x="1128" y="302" width="2" height="2" fill="#d8d8d8"/>
<rect x="1127" y="305" width="1" height="3" fill="#d8d8d8"/>
<rect x="1127" y="307" width="2" height="2" fill="#d8d8d8"/>
<rect x="1128" y="309" width="1" height="3" fill="#d8d8d8"/>
<rect x="1126" y="311" width="3" height="2" fill="#d8d8d8"/>
<rect x="1126" y="313" width="3" height="2" fill="#d8d8d8"/>
<rect x="1127" y="316" width="1" height="3" fill="#d8d8d8"/>
<rect x="1128" y="319" width="1" height="3" fill="#d8d8d8"/>
<rect x="1126" y="323" width="3" height="1" fill="#d8d8d8"/>
<rect x="1128" y="326" width="2" height="3" fill="#d8d8d8"/>
<rect x="1127" y="329" width="1" height="2" fill="#d8d8d8"/>
<rect x="1126" y="332" width="3" height="2" fill="#d8d8d8"/>
<rect x="1127" y="334" width="3" height="3" fill="#d8d8d8"/>
<rect x="1128" y="338" width="1" height="3" fill="#d8d8d8"/>
<rect x="1128" y="341" width="2" height="2" fill="#d8d8d8"/>
<rect x="1126" y="343" width="1" height="1" fill="#d8d8d8"/>
<rect x="1126" y="351" width="1" height="2" fill="#d8d8d8"/>
<rect x="1127" y="354" width="3" height="2" fill="#d8d8d8"/>
<rect x="1126" y="358" width="3" height="3" fill="#d8d8d8"/>
<rect x="1126" y="361" width="2" height="1" fill="#d8d8d8"/>
<rect x="1127" y="364" width="1" height="2" fill="#d8d8d8"/>
<rect x="1128" y="366" width="1" height="2" fill="#d8d8d8"/>
<rect x="1128" y="368" width="1" height="1" fill="#d8d8d8"/>
<rect x="1126" y="371" width="2" height="1" fill="#d8d8d8"/>
<rect x="1128" y="374" width="2" height="2" fill="#d8d8d8"/>
<rect x="1126" y="377" width="3" height="1" fill="#d8d8d8"/>
<rect x="1126" y="379" width="2" height="1" fill="#d8d8d8"/>
<rect x="1126" y="382" width="2" height="2" fill="#d8d8d8"/>
<rect x="1128.5" y="402.5" width="4" height="12" fill="none" stroke="#E0E000"/><rect x="1128" y="408" width="2" height="1" fill="#E0E000"/>
<rect x="1127" y="383" width="1" height="8" fill="#ddd"/><rect x="1128" y="390" width="2" height="1" fill="#ddd"/>
<rect x="1125" y="422" width="4" height="1" fill="#ddd"/><rect x="1126" y="426" width="2" height="2" fill="#ddd"/><rect x="1125" y="433" width="3" height="1" fill="#ddd"/><rect x="1128" y="431" width="2" height="1" fill="#ddd"/>
<rect x="1128" y="442" width="2" height="9" fill="#e8e8e8"/><rect x="1126" y="443" width="2" height="1" fill="#e8e8e8"/>
<rect x="1128" y="460" width="2" height="9" fill="#e8e8e8"/><rect x="1126" y="461" width="2" height="1" fill="#e8e8e8"/>
<rect x="1128" y="478" width="2" height="9" fill="#e8e8e8"/><rect x="1126" y="479" width="2" height="1" fill="#e8e8e8"/>
<rect x="1128" y="496" width="2" height="9" fill="#e8e8e8"/><rect x="1126" y="497" width="2" height="1" fill="#e8e8e8"/>
<rect x="1128" y="514" width="2" height="9" fill="#e8e8e8"/><rect x="1126" y="515" width="2" height="1" fill="#e8e8e8"/>
<rect x="1128" y="532" width="2" height="9" fill="#e8e8e8"/><rect x="1126" y="533" width="2" height="1" fill="#e8e8e8"/>
<rect x="1128" y="550" width="2" height="9" fill="#e8e8e8"/><rect x="1126" y="551" width="2" height="1" fill="#e8e8e8"/>
<rect x="1128" y="568" width="2" height="9" fill="#e8e8e8"/><rect x="1126" y="569" width="2" height="1" fill="#e8e8e8"/>
<rect x="1128" y="586" width="2" height="9" fill="#e8e8e8"/><rect x="1126" y="587" width="2" height="1" fill="#e8e8e8"/>
</svg>
<div class="t tb" style="left:28px;">分时</div>
<div class="t tb" style="left:61px;">1分钟</div>
<div class="t tb" style="left:100px;">5分钟</div>
<div class="t tb" style="left:139px;">15分钟</div>
<div class="t tb" style="left:185px;">30分钟</div>
<div class="t tb" style="left:231px;">60分钟</div>
<div class="t tb" style="left:278px;color:#30E8F8;">日线</div>
<div class="t tb" style="left:312px;">周线</div>
<div class="t tb" style="left:345px;">月线</div>
<div class="t tb" style="left:379px;">多周期</div>
<div class="t tb" style="left:422px;">更多 &gt;</div>
<div class="t tb" style="left:813px;">复权</div>
<div class="t tb" style="left:846px;">叠加</div>
<div class="t tb" style="left:881px;">多股</div>
<div class="t tb" style="left:916px;">统计</div>
<div class="t tb" style="left:951px;">画线</div>
<div class="t tb" style="left:989px;">F10</div>
<div class="t tb" style="left:1021px;">标记</div>
<div class="t tb" style="left:1053px;">+自选</div>
<div class="t tb" style="left:1092px;">返回</div>
<div class="t r2" style="left:3px;color:#C8C8C8;">万东医疗(日线)</div>
<div class="t r2" style="left:105px;color:#FFFFFF;">MA5: 14.76</div>
<div class="t r2" style="left:170px;color:#FFFF00;">MA10: 14.71</div>
<div class="t r2" style="left:242px;color:#FF00FF;">MA20: 14.72</div>
<div class="t r2" style="left:314px;color:#C0C0C0;">MA60: 15.88</div>
<div class="t r2" style="left:386px;color:#FF0080;">平台高点: 15.01</div>
<div class="t ax" style="top:56px">19.00</div>
<div class="t ax" style="top:102px">18.00</div>
<div class="t ax" style="top:148px">17.00</div>
<div class="t ax" style="top:194px">16.00</div>
<div class="t ax" style="top:240px">15.00</div>
<div class="t ax" style="top:332px">13.00</div>
<div class="t ax" style="top:414px">80.00</div>
<div class="t ax" style="top:444px">70.00</div>
<div class="t ax" style="top:475px">60.00</div>
<div class="t ax" style="top:505px">50.00</div>
<div class="t ax" style="top:536px">40.00</div>
<div class="t ax" style="top:566px">30.00</div>
<div class="t ax" style="top:596px">20.00</div>
<div class="t" style="left:1074px;top:284px;color:#fff;font-size:12.5px;line-height:15px;height:15px">13.86</div>
<div class="t sh" style="left:18px;color:#C8C8C8;">股朋指标网</div>
<div class="t sh" style="left:84px;color:#40E0FF;">: 14.76</div>
<div class="t sh" style="left:126px;color:#FFFFFF;">: 14.71</div>
<div class="t sh" style="left:168px;color:#FF8000;">: 14.72</div>
<div class="t sh" style="left:209px;color:#FF8080;">: 15.88</div>
<div class="t sh" style="left:293px;color:#FF8000;">: 15.88</div>
<div class="t sh" style="left:335px;color:#FF2020;">: 15.01</div>
<div class="t" style="left:2.5px;top:632px;color:#FF3C3C">2025年</div>
<div class="t" style="left:86.5px;top:632px;color:#FF3C3C">3</div>
<div class="t" style="left:162.5px;top:632px;color:#FF3C3C">4</div>
<div class="t" style="left:239.5px;top:632px;color:#FF3C3C">5</div>
<div class="t" style="left:308.5px;top:632px;color:#FF3C3C">6</div>
<div class="t" style="left:380.5px;top:632px;color:#FF3C3C">7</div>
<div class="t" style="left:464.5px;top:632px;color:#FF3C3C">8</div>
<div class="t" style="left:540.5px;top:632px;color:#FF3C3C">9</div>
<div class="t" style="left:620.5px;top:632px;color:#FF3C3C">10</div>
<div class="t" style="left:682.5px;top:632px;color:#FF3C3C">11</div>
<div class="t" style="left:755.5px;top:632px;color:#FF3C3C">12</div>
<div class="t" style="left:838.5px;top:632px;color:#FF3C3C">1</div>
<div class="t" style="left:911.5px;top:632px;color:#FF3C3C">2</div>
<div class="t" style="left:962.5px;top:632px;color:#FF3C3C">3</div>
<div id="wm"><div class="a" style="top:3px;left:5.5px;font-size:17.7px;line-height:22px;">股朋指标网</div><div class="a" style="top:25px;left:1px;font-size:16px;line-height:20px;letter-spacing:0.7px">www.7gpzb.com</div></div>
</body></html>
